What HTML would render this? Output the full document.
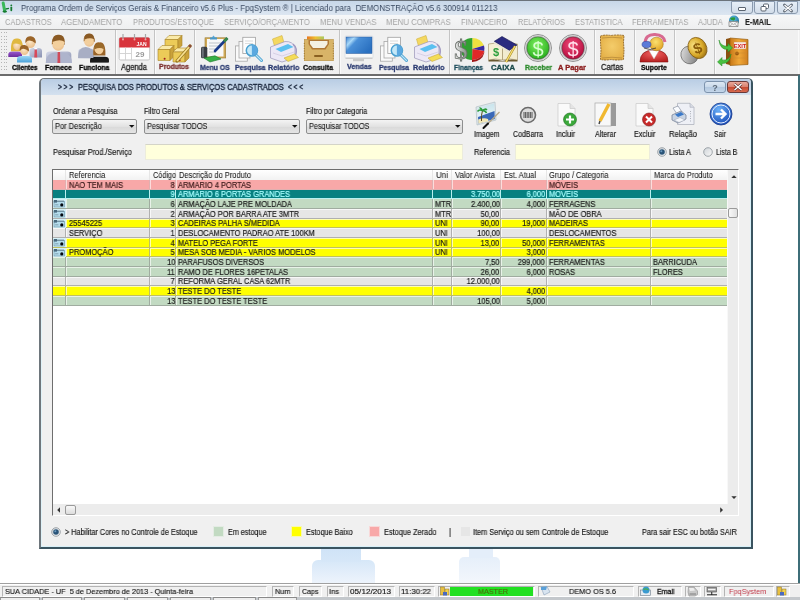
<!DOCTYPE html><html><head><meta charset="utf-8"><style>
html,body{margin:0;padding:0;width:800px;height:600px;overflow:hidden;background:#fff}
body{position:relative;font-family:'Liberation Sans',sans-serif}
.t{position:absolute;white-space:pre;line-height:1;will-change:transform;-webkit-text-stroke:0.15px currentColor}
svg{position:absolute;overflow:visible}
</style></head><body>
<div style="position:absolute;left:0px;top:0px;width:800px;height:15px;background:linear-gradient(#c6d6e8,#dce6f1);"></div>
<div style="position:absolute;left:0px;top:0px;width:800px;height:1px;background:#6b737b;"></div>
<div class="t" style="left:21.00px;top:4px;font-size:9.0px;color:#3a4a62;transform:scaleX(0.8823);transform-origin:0 0;-webkit-text-stroke:0px;">Programa Ordem de Serviços Gerais &amp; Financeiro v5.6 Plus - FpqSystem ® | Licenciado para  DEMONSTRAÇÃO v5.6 300914 011213</div>
<svg style="left:0px;top:0px" width="16" height="14" viewBox="0 0 16 14"><path d="M3.2 3 L4.6 10.8" stroke="#3ab85a" stroke-width="3" stroke-linecap="round"/><ellipse cx="4.8" cy="11.6" rx="2.3" ry="1.1" fill="#157a30"/><path d="M5.6 9 L9 8.4" stroke="#157a30" stroke-width="1.4"/><circle cx="11.3" cy="5.4" r="0.9" fill="#157a30"/><path d="M11.3 7.6 V10.3" stroke="#157a30" stroke-width="1.8" stroke-linecap="round"/></svg>
<div style="position:absolute;left:731px;top:1px;width:22px;height:13px;box-sizing:border-box;border:1px solid #8a9aae;border-radius:0 0 3px 3px;background:linear-gradient(#e6eef7,#d2dde9);"></div>
<div style="position:absolute;left:754px;top:1px;width:21px;height:13px;box-sizing:border-box;border:1px solid #8a9aae;border-radius:0 0 3px 3px;background:linear-gradient(#e6eef7,#d2dde9);"></div>
<div style="position:absolute;left:777px;top:1px;width:21px;height:13px;box-sizing:border-box;border:1px solid #8a9aae;border-radius:0 0 3px 3px;background:linear-gradient(#e6eef7,#d2dde9);"></div>
<div style="position:absolute;left:738px;top:7px;width:8px;height:3.5px;border:1px solid #5a6470;border-radius:1px;background:#fff;box-sizing:border-box"></div>
<svg style="left:760px;top:3px" width="10" height="9"><rect x="3.5" y="1" width="5" height="4.5" rx="1" fill="#fff" stroke="#5a6470"/><rect x="1" y="3.5" width="5" height="4.5" rx="1" fill="#fff" stroke="#5a6470"/></svg>
<svg style="left:783px;top:3.5px" width="10" height="8"><path d="M1.5 1 L8.5 7 M8.5 1 L1.5 7" stroke="#5a6470" stroke-width="2.8" stroke-linecap="round"/><path d="M1.5 1 L8.5 7 M8.5 1 L1.5 7" stroke="#fff" stroke-width="1.3"/></svg>
<div style="position:absolute;left:0px;top:15px;width:800px;height:14px;background:linear-gradient(#f6f7f8,#eeeff0);"></div>
<div style="position:absolute;left:0px;top:29px;width:800px;height:1px;background:#a8a8a8;"></div>
<div class="t" style="left:5.00px;top:18px;font-size:9.0px;color:#a4a4a4;transform:scaleX(0.8320);transform-origin:0 0;-webkit-text-stroke:0px;">CADASTROS</div>
<div class="t" style="left:61.00px;top:18px;font-size:9.0px;color:#a4a4a4;transform:scaleX(0.8728);transform-origin:0 0;-webkit-text-stroke:0px;">AGENDAMENTO</div>
<div class="t" style="left:133.00px;top:18px;font-size:9.0px;color:#a4a4a4;transform:scaleX(0.8314);transform-origin:0 0;-webkit-text-stroke:0px;">PRODUTOS/ESTOQUE</div>
<div class="t" style="left:224.30px;top:18px;font-size:9.0px;color:#a4a4a4;transform:scaleX(0.8469);transform-origin:0 0;-webkit-text-stroke:0px;">SERVIÇO/ORÇAMENTO</div>
<div class="t" style="left:320.20px;top:18px;font-size:9.0px;color:#a4a4a4;transform:scaleX(0.8559);transform-origin:0 0;-webkit-text-stroke:0px;">MENU VENDAS</div>
<div class="t" style="left:386.20px;top:18px;font-size:9.0px;color:#a4a4a4;transform:scaleX(0.8690);transform-origin:0 0;-webkit-text-stroke:0px;">MENU COMPRAS</div>
<div class="t" style="left:460.60px;top:18px;font-size:9.0px;color:#a4a4a4;transform:scaleX(0.8360);transform-origin:0 0;-webkit-text-stroke:0px;">FINANCEIRO</div>
<div class="t" style="left:517.80px;top:18px;font-size:9.0px;color:#a4a4a4;transform:scaleX(0.8179);transform-origin:0 0;-webkit-text-stroke:0px;">RELATÓRIOS</div>
<div class="t" style="left:574.60px;top:18px;font-size:9.0px;color:#a4a4a4;transform:scaleX(0.8346);transform-origin:0 0;-webkit-text-stroke:0px;">ESTATISTICA</div>
<div class="t" style="left:631.80px;top:18px;font-size:9.0px;color:#a4a4a4;transform:scaleX(0.8390);transform-origin:0 0;-webkit-text-stroke:0px;">FERRAMENTAS</div>
<div class="t" style="left:697.60px;top:18px;font-size:9.0px;color:#a4a4a4;transform:scaleX(0.8405);transform-origin:0 0;-webkit-text-stroke:0px;">AJUDA</div>
<div class="t" style="left:744.60px;top:18px;font-size:8.8px;color:#222;font-weight:bold;-webkit-text-stroke:0.3px currentColor;transform:scaleX(0.8513);transform-origin:0 0;-webkit-text-stroke:0.1px currentColor;">E-MAIL</div>
<svg style="left:727px;top:15px" width="14" height="14" viewBox="0 0 14 14"><defs><radialGradient id="gGl" cx="0.4" cy="0.35" r="0.7"><stop offset="0" stop-color="#6ac8f0"/><stop offset="1" stop-color="#1a6a98"/></radialGradient></defs><circle cx="7" cy="5.5" r="5" fill="url(#gGl)"/><path d="M3 3.5 Q5 1.5 8 2.5 Q9 4.5 7 5.5 Q4.5 6 3 3.5 Z M8.5 7 Q11 6 11.5 8 Q10 10 8.5 9.5 Z" fill="#2a9a3a"/><path d="M2 6.5 L11 6.5 L11 11.5 L2 11.5 Z" fill="#f4f4f4" stroke="#7a7a7a" stroke-width="0.7"/><path d="M2 6.5 L6.5 9.5 L11 6.5 M2 11.5 L5.5 9 M11 11.5 L7.5 9" stroke="#8a8a8a" stroke-width="0.6" fill="none"/></svg>
<div style="position:absolute;left:0px;top:30px;width:800px;height:44px;background:#f0f0f0;"></div>
<div style="position:absolute;left:0px;top:74px;width:800px;height:2px;background:#6c6c6c;"></div>
<div style="position:absolute;left:798px;top:30px;width:1px;height:44px;background:#fafafa;"></div>
<div style="position:absolute;left:1px;top:32px;width:1px;height:1px;background:#b4b4b4;"></div>
<div style="position:absolute;left:4px;top:32px;width:1px;height:1px;background:#b4b4b4;"></div>
<div style="position:absolute;left:6px;top:32px;width:1px;height:1px;background:#b4b4b4;"></div>
<div style="position:absolute;left:1px;top:36px;width:1px;height:1px;background:#b4b4b4;"></div>
<div style="position:absolute;left:4px;top:36px;width:1px;height:1px;background:#b4b4b4;"></div>
<div style="position:absolute;left:6px;top:36px;width:1px;height:1px;background:#b4b4b4;"></div>
<div style="position:absolute;left:1px;top:39px;width:1px;height:1px;background:#b4b4b4;"></div>
<div style="position:absolute;left:4px;top:39px;width:1px;height:1px;background:#b4b4b4;"></div>
<div style="position:absolute;left:6px;top:39px;width:1px;height:1px;background:#b4b4b4;"></div>
<div style="position:absolute;left:1px;top:42px;width:1px;height:1px;background:#b4b4b4;"></div>
<div style="position:absolute;left:4px;top:42px;width:1px;height:1px;background:#b4b4b4;"></div>
<div style="position:absolute;left:6px;top:42px;width:1px;height:1px;background:#b4b4b4;"></div>
<div style="position:absolute;left:1px;top:46px;width:1px;height:1px;background:#b4b4b4;"></div>
<div style="position:absolute;left:4px;top:46px;width:1px;height:1px;background:#b4b4b4;"></div>
<div style="position:absolute;left:6px;top:46px;width:1px;height:1px;background:#b4b4b4;"></div>
<div style="position:absolute;left:1px;top:49px;width:1px;height:1px;background:#b4b4b4;"></div>
<div style="position:absolute;left:4px;top:49px;width:1px;height:1px;background:#b4b4b4;"></div>
<div style="position:absolute;left:6px;top:49px;width:1px;height:1px;background:#b4b4b4;"></div>
<div style="position:absolute;left:1px;top:52px;width:1px;height:1px;background:#b4b4b4;"></div>
<div style="position:absolute;left:4px;top:52px;width:1px;height:1px;background:#b4b4b4;"></div>
<div style="position:absolute;left:6px;top:52px;width:1px;height:1px;background:#b4b4b4;"></div>
<div style="position:absolute;left:1px;top:56px;width:1px;height:1px;background:#b4b4b4;"></div>
<div style="position:absolute;left:4px;top:56px;width:1px;height:1px;background:#b4b4b4;"></div>
<div style="position:absolute;left:6px;top:56px;width:1px;height:1px;background:#b4b4b4;"></div>
<div style="position:absolute;left:1px;top:59px;width:1px;height:1px;background:#b4b4b4;"></div>
<div style="position:absolute;left:4px;top:59px;width:1px;height:1px;background:#b4b4b4;"></div>
<div style="position:absolute;left:6px;top:59px;width:1px;height:1px;background:#b4b4b4;"></div>
<div style="position:absolute;left:1px;top:62px;width:1px;height:1px;background:#b4b4b4;"></div>
<div style="position:absolute;left:4px;top:62px;width:1px;height:1px;background:#b4b4b4;"></div>
<div style="position:absolute;left:6px;top:62px;width:1px;height:1px;background:#b4b4b4;"></div>
<div style="position:absolute;left:1px;top:66px;width:1px;height:1px;background:#b4b4b4;"></div>
<div style="position:absolute;left:4px;top:66px;width:1px;height:1px;background:#b4b4b4;"></div>
<div style="position:absolute;left:6px;top:66px;width:1px;height:1px;background:#b4b4b4;"></div>
<div style="position:absolute;left:1px;top:69px;width:1px;height:1px;background:#b4b4b4;"></div>
<div style="position:absolute;left:4px;top:69px;width:1px;height:1px;background:#b4b4b4;"></div>
<div style="position:absolute;left:6px;top:69px;width:1px;height:1px;background:#b4b4b4;"></div>
<div style="position:absolute;left:115px;top:30px;width:1px;height:44px;background:#c4c4c4;"></div>
<div style="position:absolute;left:116px;top:30px;width:1px;height:44px;background:#fafafa;"></div>
<div style="position:absolute;left:154px;top:30px;width:1px;height:44px;background:#c4c4c4;"></div>
<div style="position:absolute;left:155px;top:30px;width:1px;height:44px;background:#fafafa;"></div>
<div style="position:absolute;left:194px;top:30px;width:1px;height:44px;background:#c4c4c4;"></div>
<div style="position:absolute;left:195px;top:30px;width:1px;height:44px;background:#fafafa;"></div>
<div style="position:absolute;left:339px;top:30px;width:1px;height:44px;background:#c4c4c4;"></div>
<div style="position:absolute;left:340px;top:30px;width:1px;height:44px;background:#fafafa;"></div>
<div style="position:absolute;left:449px;top:30px;width:1px;height:44px;background:#c4c4c4;"></div>
<div style="position:absolute;left:450px;top:30px;width:1px;height:44px;background:#fafafa;"></div>
<div style="position:absolute;left:594px;top:30px;width:1px;height:44px;background:#c4c4c4;"></div>
<div style="position:absolute;left:595px;top:30px;width:1px;height:44px;background:#fafafa;"></div>
<div style="position:absolute;left:634px;top:30px;width:1px;height:44px;background:#c4c4c4;"></div>
<div style="position:absolute;left:635px;top:30px;width:1px;height:44px;background:#fafafa;"></div>
<div style="position:absolute;left:674px;top:30px;width:1px;height:44px;background:#c4c4c4;"></div>
<div style="position:absolute;left:675px;top:30px;width:1px;height:44px;background:#fafafa;"></div>
<div style="position:absolute;left:714px;top:30px;width:1px;height:44px;background:#c4c4c4;"></div>
<div style="position:absolute;left:715px;top:30px;width:1px;height:44px;background:#fafafa;"></div>
<svg style="left:0px;top:0px" width="115" height="75" viewBox="0 0 115 75"><defs><linearGradient id="gBody" x1="0" y1="0" x2="1" y2="1"><stop offset="0" stop-color="#d4d8e8"/><stop offset="1" stop-color="#8890b0"/></linearGradient><linearGradient id="gPur" x1="0" y1="0" x2="0" y2="1"><stop offset="0" stop-color="#9a5ad0"/><stop offset="1" stop-color="#6a2a9a"/></linearGradient><linearGradient id="gBlu" x1="0" y1="0" x2="0" y2="1"><stop offset="0" stop-color="#9ad8f8"/><stop offset="1" stop-color="#4aa0d8"/></linearGradient><radialGradient id="gFace" cx="0.45" cy="0.4" r="0.7"><stop offset="0" stop-color="#fde8c8"/><stop offset="1" stop-color="#e8b880"/></radialGradient></defs><path d="M29.5 57.5 L29.5 51 Q29.5 48 33.5 48 L38 48 Q42 48 42 51 L42 57.5 Z" fill="url(#gBody)"/><path d="M33.75 48 L35.75 50 L37.75 48 Z" fill="#fff"/><path d="M34.65 49.5 L36.85 49.5 L37.25 57.5 L34.25 57.5 Z" fill="#d84a5a"/><ellipse cx="30.5" cy="42.5" rx="4.8" ry="5.5" fill="url(#gFace)"/><path d="M25.3 43.0 Q24.9 35.5 31.0 36.2 Q36.3 37.0 35.699999999999996 43.5 Q31.46 39.475 27.62 40.85 Q26.18 42.5 25.3 43.0 Z" fill="#9a6428"/><path d="M8.3 57 L8.3 54.5 Q8.3 51.5 12.3 51.5 L18 51.5 Q22 51.5 22 54.5 L22 57 Z" fill="url(#gPur)"/><path d="M11.0 51.2 Q10.5 37.8 17 38.599999999999994 Q23.5 37.8 23.0 51.2 Z" fill="#e0b840"/><ellipse cx="17" cy="45.5" rx="3.8249999999999997" ry="4.680000000000001" fill="url(#gFace)"/><path d="M12.5 44 Q12.5 38.8 17 39.3 Q21.5 38.8 21.5 45 Q17 42.4 12.5 44 Z" fill="#e0b840"/><path d="M17 62.5 L17 59 Q17 56 21 56 L28 56 Q32 56 32 59 L32 62.5 Z" fill="url(#gBlu)"/><ellipse cx="24.3" cy="50.5" rx="4.2" ry="4.6" fill="url(#gFace)"/><path d="M19.700000000000003 51.0 Q19.3 44.4 24.8 45.1 Q29.5 45.9 28.9 51.5 Q25.14 47.97 21.78 49.12 Q20.52 50.5 19.700000000000003 51.0 Z" fill="#9a6428"/><path d="M46 63 L46 54.5 Q46 51.5 50 51.5 L67.3 51.5 Q71.3 51.5 71.3 54.5 L71.3 63 Z" fill="url(#gBody)"/><path d="M56.65 51.5 L58.65 53.5 L60.65 51.5 Z" fill="#fff"/><path d="M57.55 53.0 L59.75 53.0 L60.15 63 L57.15 63 Z" fill="#d84a5a"/><ellipse cx="58.2" cy="44" rx="6" ry="6.8" fill="url(#gFace)"/><path d="M51.800000000000004 44.5 Q51.400000000000006 35.7 58.7 36.400000000000006 Q65.2 37.2 64.60000000000001 45 Q59.400000000000006 40.26 54.6 41.96 Q52.800000000000004 44 51.800000000000004 44.5 Z" fill="#9a6428"/><path d="M78.3 58.2 L78.3 51.5 Q78.3 48.5 82.3 48.5 L89.6 48.5 Q93.6 48.5 93.6 51.5 L93.6 58.2 Z" fill="url(#gBody)"/><ellipse cx="89.2" cy="41" rx="5.2" ry="5.8" fill="url(#gFace)"/><path d="M83.6 41.5 Q83.2 33.7 89.7 34.400000000000006 Q95.4 35.2 94.80000000000001 42 Q90.24000000000001 37.81 86.08 39.26 Q84.52 41 83.6 41.5 Z" fill="#9a6428"/><path d="M90.1 62.2 L90.1 59.8 Q90.1 56.8 94.1 56.8 L104.9 56.8 Q108.9 56.8 108.9 59.8 L108.9 62.2 Z" fill="#151515"/><path d="M93.2 55.4 Q92.7 41.6 99.3 42.4 Q105.89999999999999 41.6 105.39999999999999 55.4 Z" fill="#9a6428"/><ellipse cx="99.3" cy="49.5" rx="3.9099999999999997" ry="4.86" fill="url(#gFace)"/><path d="M94.7 48 Q94.7 42.6 99.3 43.1 Q103.89999999999999 42.6 103.89999999999999 49 Q99.3 46.3 94.7 48 Z" fill="#9a6428"/></svg>
<div class="t" style="left:12.00px;top:64px;font-size:7.2px;color:#000;font-weight:bold;-webkit-text-stroke:0.3px currentColor;transform:scaleX(0.9104);transform-origin:0 0;">Clientes</div>
<svg style="left:40px;top:30px" width="40" height="40" viewBox="0 0 40 40"><path d="M5.7 33 Q5.7 22 18.85 22 Q32 22 32 33 Z" fill="#aeb4cc"/><path d="M17.650000000000002 22 L20.05 22 L20.25 33 L17.450000000000003 33 Z" fill="#d04a5a"/><circle cx="18.5" cy="11.5" r="6" fill="#f3cf9c"/><path d="M12.2 12.0 Q12.5 4.3 18.5 4.7 Q24.5 4.3 24.8 12.0 Q20.3 8.5 12.2 12.0 Z" fill="#8a5a24"/></svg>
<div class="t" style="left:45.00px;top:64px;font-size:7.2px;color:#000;font-weight:bold;-webkit-text-stroke:0.3px currentColor;transform:scaleX(0.9532);transform-origin:0 0;">Fornece</div>
<svg style="left:75px;top:30px" width="40" height="40" viewBox="0 0 40 40"><path d="M3 28 Q3 17 10.75 17 Q18.5 17 18.5 28 Z" fill="#a8aec4"/><circle cx="14.2" cy="9.2" r="4.8" fill="#f3cf9c"/><path d="M9.099999999999998 9.7 Q9.399999999999999 3.1999999999999993 14.2 3.5999999999999996 Q19.0 3.1999999999999993 19.3 9.7 Q15.639999999999999 6.799999999999999 9.099999999999998 9.7 Z" fill="#8a5a24"/><path d="M15 32.5 Q15 27 24.35 27 Q33.7 27 33.7 32.5 Z" fill="#1a1a1a"/><circle cx="24" cy="19" r="4.6" fill="#f3cf9c"/><path d="M19.099999999999998 19.5 Q19.4 13.200000000000001 24 13.6 Q28.6 13.200000000000001 28.900000000000002 19.5 Q25.38 16.7 19.099999999999998 19.5 Z" fill="#9a6a2a"/></svg>
<div class="t" style="left:78.70px;top:64px;font-size:7.2px;color:#000;font-weight:bold;-webkit-text-stroke:0.3px currentColor;transform:scaleX(0.9469);transform-origin:0 0;">Funciona</div>
<svg style="left:118px;top:33px" width="33" height="28" viewBox="0 0 33 28"><rect x="1.2" y="4.5" width="30.5" height="22.5" rx="1.5" fill="#fff" stroke="#c4c4c4" stroke-width="1"/><path d="M1.2 6 Q1.2 4.5 2.7 4.5 L30.2 4.5 Q31.7 4.5 31.7 6 L31.7 14.5 L1.2 14.5 Z" fill="#d8343c"/><text x="23.5" y="13" font-size="5" font-weight="bold" fill="#fff" text-anchor="middle" font-family="Liberation Sans">JAN</text><text x="22" y="24" font-size="8" font-weight="bold" fill="#9a9a9a" text-anchor="middle" font-family="Liberation Sans">29</text><path d="M7.5 14.5 V27 M13.5 14.5 V27 M1.2 20.5 H13.5" stroke="#d0d0d0" stroke-width="0.9"/><path d="M5 1 V6.5 M16.5 1 V6.5 M27.5 1 V6.5" stroke="#a8a8a8" stroke-width="1.2"/><circle cx="5" cy="6.5" r="1" fill="#f0a0a0"/><circle cx="16.5" cy="6.5" r="1" fill="#f0a0a0"/><circle cx="27.5" cy="6.5" r="1" fill="#f0a0a0"/></svg>
<div class="t" style="left:121.00px;top:63px;font-size:8.6px;color:#222;transform:scaleX(0.8768);transform-origin:0 0;-webkit-text-stroke:0.3px currentColor;">Agenda</div>
<svg style="left:155px;top:33px" width="40" height="32" viewBox="0 0 40 32"><path d="M10 6.5 L14 2.5 L27 2.5 L23 6.5 Z" fill="#faeaa8" stroke="#a88428" stroke-width="0.6"/><path d="M10 6.5 L23 6.5 L23 16.5 L10 16.5 Z" fill="#eccb58" stroke="#a88428" stroke-width="0.6"/><path d="M23 6.5 L27 2.5 L27 12.5 L23 16.5 Z" fill="#caa23a" stroke="#a88428" stroke-width="0.6"/><circle cx="17.15" cy="14.7" r="1" fill="#a02020"/><path d="M3 16.5 L7 12.5 L19 12.5 L15 16.5 Z" fill="#faeaa8" stroke="#a88428" stroke-width="0.6"/><path d="M3 16.5 L15 16.5 L15 27.5 L3 27.5 Z" fill="#eccb58" stroke="#a88428" stroke-width="0.6"/><path d="M15 16.5 L19 12.5 L19 23.5 L15 27.5 Z" fill="#caa23a" stroke="#a88428" stroke-width="0.6"/><circle cx="9.600000000000001" cy="25.7" r="1" fill="#a02020"/><path d="M18 19 L22 15 L34 15 L30 19 Z" fill="#faeaa8" stroke="#a88428" stroke-width="0.6"/><path d="M18 19 L30 19 L30 29 L18 29 Z" fill="#eccb58" stroke="#a88428" stroke-width="0.6"/><path d="M30 19 L34 15 L34 25 L30 29 Z" fill="#caa23a" stroke="#a88428" stroke-width="0.6"/><circle cx="24.6" cy="27.2" r="1" fill="#a02020"/><path d="M22 28 L35 13" stroke="#9a7a20" stroke-width="3.2" stroke-linecap="round"/><path d="M22 28 L35 13" stroke="#f8e090" stroke-width="1.8"/><circle cx="35" cy="13" r="1.6" fill="#8a4a3a"/></svg>
<div class="t" style="left:158.75px;top:63px;font-size:7.0px;color:#7a2e2e;font-weight:bold;-webkit-text-stroke:0.3px currentColor;transform:scaleX(0.9765);transform-origin:0 0;">Produtos</div>
<svg style="left:198px;top:33px" width="34" height="32" viewBox="0 0 34 32"><rect x="7" y="4.8" width="20.7" height="20.2" fill="#d0aa58" stroke="#9a7a30" stroke-width="0.6"/><rect x="9" y="6" width="16.5" height="17.5" fill="#f8f8f8"/><path d="M11 10 H23 M11 13 H23 M11 16 H20 M11 19 H18" stroke="#a8b0b8" stroke-width="0.7"/><path d="M13 5.5 L15.5 2.5 L18 5.5 Z" fill="#5aa8d8"/><rect x="12" y="4.5" width="7" height="2" fill="#4a98c8"/><path d="M17 18 L28.5 6" stroke="#1a3a8a" stroke-width="2.6" stroke-linecap="round"/><path d="M26 8.5 L29.5 5" stroke="#3a8a4a" stroke-width="2.8"/><rect x="3" y="13.8" width="6.3" height="11.5" rx="1.5" fill="#3a3e44"/><rect x="3.8" y="14.5" width="2" height="10" fill="#6a7078"/><path d="M6 25 L17 22.8 L23 26 L12 29 Z" fill="#38b048" stroke="#1a7a2a" stroke-width="0.6"/></svg>
<div class="t" style="left:199.75px;top:64px;font-size:7.3px;color:#2a3a70;font-weight:bold;-webkit-text-stroke:0.3px currentColor;transform:scaleX(0.9404);transform-origin:0 0;">Menu OS</div>
<svg style="left:234px;top:33px" width="30" height="31" viewBox="0 0 30 31"><rect x="1.5" y="12.9" width="11.8" height="15.3" fill="#fafafa" stroke="#a8a8a8" stroke-width="0.8"/><rect x="5" y="8.4" width="11" height="16.6" fill="#fafafa" stroke="#a8a8a8" stroke-width="0.8"/><rect x="8.8" y="4.3" width="12.7" height="16.2" fill="#fdfdfd" stroke="#a0a0a0" stroke-width="0.8"/><path d="M11 8 H19 M11 10.5 H19" stroke="#c8c8c8" stroke-width="0.6"/><path d="M21.5 21.5 L27.5 27.5" stroke="#4aa0d0" stroke-width="3" stroke-linecap="round"/><path d="M21.5 21.5 L27.5 27.5" stroke="#b8e4f8" stroke-width="1.2" stroke-linecap="round"/><circle cx="17.9" cy="17.4" r="5.6" fill="#c4e8f8" stroke="#4aa0d0" stroke-width="1.5"/><path d="M17.9 11.8 A5.6 5.6 0 0 1 17.9 23 Z" fill="#5aa8e0"/></svg>
<div class="t" style="left:234.60px;top:64px;font-size:7.3px;color:#2a3a70;font-weight:bold;-webkit-text-stroke:0.3px currentColor;transform:scaleX(0.9483);transform-origin:0 0;">Pesquisa</div>
<svg style="left:269px;top:33px" width="32" height="31" viewBox="0 0 32 31"><path d="M3.5 6 L13 2.5 L15.5 11.5 L6 15 Z" fill="#f4d860" stroke="#c8a830" stroke-width="0.5"/><path d="M1.5 14 L16 8.5 Q24 8 26 15 L26 25 L13 29 L1.5 25 Z" fill="#ece8f6" stroke="#9a94b8" stroke-width="0.7"/><path d="M24 11 Q29 15 26.5 23" stroke="#a098c0" stroke-width="1.4" fill="none"/><path d="M6.5 16 L19 11 L24.5 14 L12 19 Z" fill="#5ac0f0"/><path d="M4 20 L13 23 L25 19" stroke="#c8c0d8" stroke-width="0.6" fill="none"/><path d="M15 25 L25.5 21 L29.5 24.5 L19 28.5 Z" fill="#f4dc58" stroke="#c0a030" stroke-width="0.5"/></svg>
<div class="t" style="left:268.40px;top:64px;font-size:7.3px;color:#2a3a70;font-weight:bold;-webkit-text-stroke:0.3px currentColor;transform:scaleX(0.9893);transform-origin:0 0;">Relatório</div>
<svg style="left:303px;top:33px" width="32" height="31" viewBox="0 0 32 31"><defs><linearGradient id="gTab" x1="0" y1="0" x2="1" y2="0"><stop offset="0" stop-color="#e87820"/><stop offset="0.5" stop-color="#f0c030"/><stop offset="1" stop-color="#a8c860"/></linearGradient></defs><path d="M4 3.4 L21 3.4 L21 7 L4 7 Z" fill="url(#gTab)"/><rect x="1.3" y="6.5" width="29" height="21.2" fill="#d8b468" stroke="#b89040" stroke-width="0.6"/><path d="M5.5 7 L26 7 L26 11 L22.5 16.5 L9 16.5 L5.5 11 Z" fill="#b07838"/><path d="M7 8 L24.5 8 L24.5 11 L21.5 15 L10 15 L7 11 Z" fill="#f4f0e4"/><rect x="11" y="22" width="9" height="2" rx="1" fill="#8a6020"/><path d="M1.3 10 V27 M30.3 10 V27" stroke="#a07830" stroke-width="1" stroke-dasharray="1 1.5"/></svg>
<div class="t" style="left:303.40px;top:64px;font-size:7.3px;color:#111;font-weight:bold;-webkit-text-stroke:0.3px currentColor;transform:scaleX(0.9606);transform-origin:0 0;">Consulta</div>
<svg style="left:344px;top:35px" width="30" height="28" viewBox="0 0 30 28"><defs><linearGradient id="gV" x1="0" y1="0" x2="1" y2="0.6"><stop offset="0" stop-color="#3a80d0"/><stop offset="0.25" stop-color="#a8d8f8"/><stop offset="0.4" stop-color="#4a90d8"/><stop offset="1" stop-color="#2a70c0"/></linearGradient></defs><rect x="1" y="1" width="28" height="22" rx="1" fill="#f8f8f8" stroke="#d0d8e0" stroke-width="0.6"/><rect x="2" y="2" width="26" height="16.5" fill="url(#gV)" stroke="#2a5a9a" stroke-width="0.5"/><path d="M1.5 23.2 H28.5" stroke="#b8b8b8" stroke-width="0.8"/><rect x="9" y="24" width="11" height="2.2" fill="#c8c8c8"/></svg>
<div class="t" style="left:346.90px;top:63px;font-size:7.3px;color:#2a3a70;font-weight:bold;-webkit-text-stroke:0.3px currentColor;transform:scaleX(0.9661);transform-origin:0 0;">Vendas</div>
<svg style="left:379px;top:33px" width="30" height="31" viewBox="0 0 30 31"><rect x="1.5" y="12.9" width="11.8" height="15.3" fill="#fafafa" stroke="#a8a8a8" stroke-width="0.8"/><rect x="5" y="8.4" width="11" height="16.6" fill="#fafafa" stroke="#a8a8a8" stroke-width="0.8"/><rect x="8.8" y="4.3" width="12.7" height="16.2" fill="#fdfdfd" stroke="#a0a0a0" stroke-width="0.8"/><path d="M11 8 H19 M11 10.5 H19" stroke="#c8c8c8" stroke-width="0.6"/><path d="M21.5 21.5 L27.5 27.5" stroke="#4aa0d0" stroke-width="3" stroke-linecap="round"/><path d="M21.5 21.5 L27.5 27.5" stroke="#b8e4f8" stroke-width="1.2" stroke-linecap="round"/><circle cx="17.9" cy="17.4" r="5.6" fill="#c4e8f8" stroke="#4aa0d0" stroke-width="1.5"/><path d="M17.9 11.8 A5.6 5.6 0 0 1 17.9 23 Z" fill="#5aa8e0"/></svg>
<div class="t" style="left:379.00px;top:64px;font-size:7.3px;color:#2a3a70;font-weight:bold;-webkit-text-stroke:0.3px currentColor;transform:scaleX(0.9359);transform-origin:0 0;">Pesquisa</div>
<svg style="left:413px;top:33px" width="32" height="31" viewBox="0 0 32 31"><path d="M3.5 6 L13 2.5 L15.5 11.5 L6 15 Z" fill="#f4d860" stroke="#c8a830" stroke-width="0.5"/><path d="M1.5 14 L16 8.5 Q24 8 26 15 L26 25 L13 29 L1.5 25 Z" fill="#ece8f6" stroke="#9a94b8" stroke-width="0.7"/><path d="M24 11 Q29 15 26.5 23" stroke="#a098c0" stroke-width="1.4" fill="none"/><path d="M6.5 16 L19 11 L24.5 14 L12 19 Z" fill="#5ac0f0"/><path d="M4 20 L13 23 L25 19" stroke="#c8c0d8" stroke-width="0.6" fill="none"/><path d="M15 25 L25.5 21 L29.5 24.5 L19 28.5 Z" fill="#f4dc58" stroke="#c0a030" stroke-width="0.5"/></svg>
<div class="t" style="left:413.00px;top:64px;font-size:7.3px;color:#2a3a70;font-weight:bold;-webkit-text-stroke:0.3px currentColor;transform:scaleX(0.9925);transform-origin:0 0;">Relatório</div>
<svg style="left:450px;top:33px" width="38" height="31" viewBox="0 0 38 31"><defs><linearGradient id="gSil" x1="0" y1="0" x2="1" y2="0"><stop offset="0" stop-color="#f0f0f0"/><stop offset="1" stop-color="#808880"/></linearGradient></defs><path d="M22.3 16 L22.3 5 A12 11 0 0 1 34 12.5 Z" fill="#f0e040"/><path d="M22.3 16 L34 12.5 A12 11 0 0 1 34.2 18 Z" fill="#3a2aa0"/><path d="M22.3 16 L34.2 18 A12 11 0 0 1 22 27 Z" fill="#e02828"/><path d="M22.3 16 L22 27 A12 11 0 0 1 22.3 5 Z" fill="#30a030"/><path d="M22 27 A12 11 0 0 0 34.2 18 L34.2 20 A12 11 0 0 1 22 29 Z" fill="#a01818"/><text x="11" y="26" font-size="27" font-weight="bold" fill="url(#gSil)" stroke="#6a706a" stroke-width="0.8" text-anchor="middle" font-family="Liberation Serif">$</text></svg>
<div class="t" style="left:454.00px;top:64px;font-size:7.3px;color:#1a4a5a;font-weight:bold;-webkit-text-stroke:0.3px currentColor;transform:scaleX(0.9164);transform-origin:0 0;">Finanças</div>
<svg style="left:487px;top:33px" width="33" height="31" viewBox="0 0 33 31"><path d="M1.5 11 Q8 9 15.5 11.5 L15.5 27 Q8 25 1.5 27 Z" fill="#f6f0d4" stroke="#9a8a60" stroke-width="0.6"/><path d="M15.5 11.5 Q23 9 30.5 11 L30.5 27 Q23 25 15.5 27 Z" fill="#f2ecd0" stroke="#9a8a60" stroke-width="0.6"/><path d="M1.5 27 Q8 25.5 15.5 28 Q23 25.5 30.5 27 L30.5 28.5 L1.5 28.5 Z" fill="#6a5a30"/><text x="9" y="22.5" font-size="11" font-weight="bold" fill="#30a040" text-anchor="middle" font-family="Liberation Sans">$</text><path d="M7 8.5 L15 3.5 L30 12 L22 17.5 Z" fill="#2a2a80" stroke="#10104a" stroke-width="0.6"/><path d="M7 8.5 L22 17.5 L22 19.5 L7 10.5 Z" fill="#e8e4d8"/><path d="M19 29 L28 13" stroke="#a08020" stroke-width="2.4"/><path d="M19 29 L28 13" stroke="#f8e070" stroke-width="1.4"/></svg>
<div class="t" style="left:491.00px;top:64px;font-size:7.3px;color:#1a4a4a;font-weight:bold;-webkit-text-stroke:0.3px currentColor;transform:scaleX(1.0567);transform-origin:0 0;">CAIXA</div>
<svg style="left:524px;top:34px" width="30" height="30" viewBox="0 0 30 30"><defs><radialGradient id="g524" cx="0.45" cy="0.35" r="0.7"><stop offset="0" stop-color="#80f060"/><stop offset="1" stop-color="#20a818"/></radialGradient></defs><circle cx="14" cy="14" r="13.5" fill="#e8e8e8" stroke="#888" stroke-width="0.9"/><circle cx="14" cy="14" r="12" fill="none" stroke="#b0b0b0" stroke-width="0.8"/><circle cx="14" cy="14" r="11.2" fill="url(#g524)" stroke="#404040" stroke-width="0.5"/><text x="14" y="21.5" font-size="20" fill="#d8ffd0" text-anchor="middle" font-family="Liberation Sans">$</text></svg>
<div class="t" style="left:525.00px;top:64px;font-size:7.3px;color:#2a8a2a;font-weight:bold;-webkit-text-stroke:0.3px currentColor;transform:scaleX(0.9371);transform-origin:0 0;">Receber</div>
<svg style="left:559px;top:34px" width="30" height="30" viewBox="0 0 30 30"><defs><radialGradient id="g559" cx="0.45" cy="0.35" r="0.7"><stop offset="0" stop-color="#f04a7a"/><stop offset="1" stop-color="#b00838"/></radialGradient></defs><circle cx="14" cy="14" r="13.5" fill="#e8e8e8" stroke="#888" stroke-width="0.9"/><circle cx="14" cy="14" r="12" fill="none" stroke="#b0b0b0" stroke-width="0.8"/><circle cx="14" cy="14" r="11.2" fill="url(#g559)" stroke="#404040" stroke-width="0.5"/><text x="14" y="21.5" font-size="20" fill="#ffe0ec" text-anchor="middle" font-family="Liberation Sans">$</text></svg>
<div class="t" style="left:558.00px;top:64px;font-size:7.3px;color:#8a1a1a;font-weight:bold;-webkit-text-stroke:0.3px currentColor;transform:scaleX(1.0249);transform-origin:0 0;">A Pagar</div>
<svg style="left:599px;top:34px" width="27" height="28" viewBox="0 0 27 28"><defs><radialGradient id="gC" cx="0.5" cy="0.45" r="0.6"><stop offset="0" stop-color="#f4cc6a"/><stop offset="1" stop-color="#e4b048"/></radialGradient></defs><path d="M1.5 2 Q6 0.5 12 1.5 Q19 0.5 25 1.5 L24.5 8 L25 16 L24.5 25.5 Q18 26.5 12 25.5 Q6 26.5 1.5 25.5 L2 16 L1.5 8 Z" fill="url(#gC)" stroke="#9a7030" stroke-width="1" stroke-dasharray="2 0.7"/><path d="M3 4 Q13 2.5 23 4" stroke="#b88a3a" stroke-width="0.8" fill="none"/><path d="M3 24 Q13 22.5 23 24" stroke="#b88a3a" stroke-width="0.8" fill="none"/></svg>
<div class="t" style="left:600.60px;top:63px;font-size:8.6px;color:#222;transform:scaleX(0.8843);transform-origin:0 0;-webkit-text-stroke:0.3px currentColor;">Cartas</div>
<svg style="left:638px;top:32px" width="32" height="32" viewBox="0 0 32 32"><defs><radialGradient id="gSu" cx="0.5" cy="0.3" r="0.8"><stop offset="0" stop-color="#f06060"/><stop offset="1" stop-color="#b01818"/></radialGradient><radialGradient id="gFa" cx="0.45" cy="0.35" r="0.7"><stop offset="0" stop-color="#fbe070"/><stop offset="1" stop-color="#e0a020"/></radialGradient></defs><path d="M2 30 Q2 18 16 18 Q30 18 30 30 Z" fill="url(#gSu)" stroke="#801010" stroke-width="0.6"/><path d="M11 18.5 L16 27 L21 18.5 Z" fill="#fff" stroke="#c0c0c0" stroke-width="0.4"/><circle cx="18.5" cy="12" r="6.8" fill="url(#gFa)" stroke="#a07010" stroke-width="0.5"/><path d="M7 12 Q7 2 17 2.5 Q26 3 27 10" stroke="#d86a90" stroke-width="3" fill="none"/><ellipse cx="8.5" cy="12.5" rx="4.5" ry="3.2" fill="#5a7ad8" stroke="#2a3a8a" stroke-width="0.5"/><path d="M6 16 Q12 19 18 16" stroke="#333" stroke-width="0.8" fill="none"/></svg>
<div class="t" style="left:640.60px;top:65px;font-size:6.6px;color:#111;font-weight:bold;-webkit-text-stroke:0.3px currentColor;transform:scaleX(1.0387);transform-origin:0 0;">Suporte</div>
<svg style="left:679px;top:36px" width="32" height="30" viewBox="0 0 32 30"><defs><linearGradient id="gSi" x1="0" y1="0" x2="1" y2="1"><stop offset="0" stop-color="#e8e8e8"/><stop offset="1" stop-color="#707070"/></linearGradient><radialGradient id="gGo" cx="0.4" cy="0.35" r="0.75"><stop offset="0" stop-color="#fbe58a"/><stop offset="0.6" stop-color="#d8a828"/><stop offset="1" stop-color="#8a6010"/></radialGradient></defs><ellipse cx="10.5" cy="19" rx="8.5" ry="9" transform="rotate(-30 10.5 19)" fill="url(#gSi)" stroke="#555" stroke-width="0.6"/><ellipse cx="18.5" cy="12" rx="9" ry="11" transform="rotate(-30 18.5 12)" fill="url(#gGo)" stroke="#7a5208" stroke-width="0.7"/><text x="18.5" y="17.5" font-size="15" font-weight="bold" fill="#8a5a08" text-anchor="middle" font-family="Liberation Sans" transform="rotate(-20 18.5 12)">$</text></svg>
<svg style="left:717px;top:36px" width="34" height="31" viewBox="0 0 34 31"><defs><linearGradient id="gDo" x1="0" y1="0" x2="1" y2="0"><stop offset="0" stop-color="#c87818"/><stop offset="0.5" stop-color="#f0a838"/><stop offset="1" stop-color="#d08020"/></linearGradient></defs><path d="M9 3 L13 2 L13 29 L9 28 Z" fill="#8a5010"/><path d="M13 2 L31 3.5 L31 28.5 L13 29.5 Z" fill="url(#gDo)" stroke="#9a6010" stroke-width="0.7"/><rect x="17" y="6" width="12" height="7" fill="#f8e8e0" stroke="#c09060" stroke-width="0.4"/><text x="23" y="11.6" font-size="5.6" font-weight="bold" fill="#d02020" text-anchor="middle" font-family="Liberation Sans">EXIT</text><circle cx="20" cy="17.5" r="1.6" fill="#a86010" stroke="#6a3a08" stroke-width="0.4"/><path d="M15 17 H29 M15 22 H29" stroke="#c88a30" stroke-width="0.5"/><path d="M2 4 Q4 11 11 10 L11 7.5 L15.5 12 L11 16 L11 13.5 Q3 14 2 4 Z" fill="#48c040" stroke="#208a20" stroke-width="0.5"/><path d="M14 18 Q12 25 5 24 L5 21.5 L0.5 26 L5 30 L5 27.5 Q13 28 14 18 Z" fill="#48c040" stroke="#208a20" stroke-width="0.5"/></svg>
<div style="position:absolute;left:798px;top:75px;width:2px;height:509px;background:#3e6e78;"></div>
<div style="position:absolute;left:312px;top:560px;width:63px;height:24px;background:linear-gradient(#d6e7f8,#eef4fc);border-radius:6px 6px 0 0;"></div>
<div style="position:absolute;left:321px;top:548px;width:40px;height:14px;background:linear-gradient(#cfe3f7,#d6e7f8);"></div>
<div style="position:absolute;left:459px;top:557px;width:41px;height:27px;background:linear-gradient(#e6effa,#f3f7fc);border-radius:5px 5px 0 0;"></div>
<div style="position:absolute;left:469px;top:548px;width:24px;height:10px;background:#e4eefa;"></div>
<div style="position:absolute;left:39px;top:78px;width:714px;height:471px;box-sizing:border-box;border:1px solid #6e767c;border-width:1px 2px 2px 2px;border-bottom-color:#3a5460;border-right-color:#3a5460;border-radius:5px 5px 0 0;background:#f0f0f0;"></div>
<div style="position:absolute;left:41px;top:79px;width:710px;height:16px;background:linear-gradient(#b9cde4,#d4e1ef);border-radius:4px 4px 0 0;"></div>
<div style="position:absolute;left:41px;top:95px;width:1px;height:452px;background:#dff2f8;"></div>
<div style="position:absolute;left:750px;top:95px;width:1px;height:452px;background:#d8f0f8;"></div>
<div style="position:absolute;left:41px;top:546px;width:710px;height:1px;background:#d8f0f8;"></div>
<div class="t" style="left:57.50px;top:83px;font-size:8.4px;color:#18243a;transform:scaleX(0.7738);transform-origin:0 0;-webkit-text-stroke:0.35px currentColor;">&gt; &gt; &gt;</div>
<div class="t" style="left:77.60px;top:83px;font-size:8.4px;color:#18243a;transform:scaleX(0.8873);transform-origin:0 0;-webkit-text-stroke:0.35px currentColor;">PESQUISA DOS PRODUTOS &amp; SERVIÇOS CADASTRADOS</div>
<div class="t" style="left:287.50px;top:83px;font-size:8.4px;color:#18243a;transform:scaleX(0.7738);transform-origin:0 0;-webkit-text-stroke:0.35px currentColor;">&lt; &lt; &lt;</div>
<div style="position:absolute;left:704px;top:81px;width:22px;height:12px;box-sizing:border-box;border:1px solid #7d93ad;border-radius:3px;background:linear-gradient(#dde8f4 0%,#c9d9ea 50%,#b3c8df 51%,#c4d6ea 100%);"></div>
<div style="position:absolute;left:727px;top:81px;width:22px;height:12px;box-sizing:border-box;border:1px solid #6a3a3a;border-radius:3px;background:linear-gradient(#eaa89a 0%,#d9806e 50%,#c64a32 51%,#d86a50 100%);"></div>
<div class="t" style="left:615.00px;width:200px;text-align:center;top:84px;font-size:9px;color:#5a6878;font-weight:bold;-webkit-text-stroke:0.3px currentColor;-webkit-text-stroke:0px;">?</div>
<svg style="left:733px;top:83px" width="10" height="8"><path d="M1.5 1 L8.5 7 M8.5 1 L1.5 7" stroke="#5a2a2a" stroke-width="2.8"/><path d="M1.5 1 L8.5 7 M8.5 1 L1.5 7" stroke="#fff" stroke-width="1.5"/></svg>
<div class="t" style="left:53.00px;top:108px;font-size:8.2px;color:#151515;transform:scaleX(0.8844);transform-origin:0 0;">Ordenar a Pesquisa</div>
<div class="t" style="left:143.75px;top:108px;font-size:8.2px;color:#151515;transform:scaleX(0.8754);transform-origin:0 0;">Filtro Geral</div>
<div class="t" style="left:306.25px;top:108px;font-size:8.2px;color:#151515;transform:scaleX(0.8734);transform-origin:0 0;">Filtro por Categoria</div>
<div style="position:absolute;left:52px;top:119px;width:85px;height:15px;box-sizing:border-box;border:1px solid #8e8f8f;border-radius:2px;background:linear-gradient(#f4f4f4,#e2e2e2 50%,#d9d9d9 51%,#e4e4e4);"></div>
<div class="t" style="left:55.00px;top:123px;font-size:8.2px;color:#111;transform:scaleX(0.9108);transform-origin:0 0;-webkit-text-stroke:0.05px currentColor;">Por Descrição</div>
<svg style="left:128.5px;top:125.3px" width="6" height="3"><path d="M0 0 H5.5 L2.75 2.8 Z" fill="#111"/></svg>
<div style="position:absolute;left:144px;top:119px;width:156px;height:15px;box-sizing:border-box;border:1px solid #8e8f8f;border-radius:2px;background:linear-gradient(#f4f4f4,#e2e2e2 50%,#d9d9d9 51%,#e4e4e4);"></div>
<div class="t" style="left:147.00px;top:123px;font-size:8.2px;color:#111;transform:scaleX(0.8949);transform-origin:0 0;-webkit-text-stroke:0.05px currentColor;">Pesquisar TODOS</div>
<svg style="left:291.5px;top:125.3px" width="6" height="3"><path d="M0 0 H5.5 L2.75 2.8 Z" fill="#111"/></svg>
<div style="position:absolute;left:306px;top:119px;width:157px;height:15px;box-sizing:border-box;border:1px solid #8e8f8f;border-radius:2px;background:linear-gradient(#f4f4f4,#e2e2e2 50%,#d9d9d9 51%,#e4e4e4);"></div>
<div class="t" style="left:309.00px;top:123px;font-size:8.2px;color:#111;transform:scaleX(0.8949);transform-origin:0 0;-webkit-text-stroke:0.05px currentColor;">Pesquisar TODOS</div>
<svg style="left:454.5px;top:125.3px" width="6" height="3"><path d="M0 0 H5.5 L2.75 2.8 Z" fill="#111"/></svg>
<div class="t" style="left:53.00px;top:149px;font-size:8.2px;color:#151515;transform:scaleX(0.8981);transform-origin:0 0;">Pesquisar Prod./Serviço</div>
<div style="position:absolute;left:145px;top:144px;width:318px;height:16px;box-sizing:border-box;border:1px solid #ececdc;border-top-color:#d4d4c8;background:#ffffdc;"></div>
<div class="t" style="left:474.30px;top:149px;font-size:8.2px;color:#151515;transform:scaleX(0.9078);transform-origin:0 0;">Referencia</div>
<div style="position:absolute;left:515px;top:144px;width:135px;height:16px;box-sizing:border-box;border:1px solid #ececdc;border-top-color:#d4d4c8;background:#ffffdc;"></div>
<svg style="left:657px;top:147px" width="10" height="10" viewBox="0 0 10 10"><defs><linearGradient id="gR" x1="0" y1="0" x2="1" y2="1"><stop offset="0" stop-color="#cfd4d8"/><stop offset="1" stop-color="#f8f8f8"/></linearGradient></defs><circle cx="5" cy="5" r="4.3" fill="url(#gR)" stroke="#8a9298" stroke-width="0.8"/><circle cx="5" cy="5" r="2.8" fill="#2a5478"/><circle cx="4.3" cy="4.2" r="1" fill="#6a9ac0"/></svg>
<div class="t" style="left:669.00px;top:149px;font-size:8.2px;color:#151515;transform:scaleX(0.8937);transform-origin:0 0;">Lista A</div>
<svg style="left:703px;top:147px" width="10" height="10" viewBox="0 0 10 10"><defs><linearGradient id="gR" x1="0" y1="0" x2="1" y2="1"><stop offset="0" stop-color="#cfd4d8"/><stop offset="1" stop-color="#f8f8f8"/></linearGradient></defs><circle cx="5" cy="5" r="4.3" fill="url(#gR)" stroke="#8a9298" stroke-width="0.8"/></svg>
<div class="t" style="left:715.60px;top:149px;font-size:8.2px;color:#151515;transform:scaleX(0.8536);transform-origin:0 0;">Lista B</div>
<div class="t" style="left:474.40px;top:131px;font-size:8.2px;color:#151515;transform:scaleX(0.8642);transform-origin:0 0;">Imagem</div>
<div class="t" style="left:513.00px;top:131px;font-size:8.2px;color:#151515;transform:scaleX(0.8548);transform-origin:0 0;">CodBarra</div>
<div class="t" style="left:556.40px;top:131px;font-size:8.2px;color:#151515;transform:scaleX(0.8777);transform-origin:0 0;">Incluir</div>
<div class="t" style="left:595.00px;top:131px;font-size:8.2px;color:#151515;transform:scaleX(0.8695);transform-origin:0 0;">Alterar</div>
<div class="t" style="left:634.00px;top:131px;font-size:8.2px;color:#151515;transform:scaleX(0.8779);transform-origin:0 0;">Excluir</div>
<div class="t" style="left:669.00px;top:131px;font-size:8.2px;color:#151515;transform:scaleX(0.9307);transform-origin:0 0;">Relação</div>
<div class="t" style="left:714.00px;top:131px;font-size:8.2px;color:#151515;transform:scaleX(0.8229);transform-origin:0 0;">Sair</div>
<svg style="left:474px;top:100px" width="28" height="30" viewBox="0 0 28 30"><defs><linearGradient id="gSky" x1="0" y1="0" x2="0" y2="1"><stop offset="0" stop-color="#c8e4ec"/><stop offset="1" stop-color="#f4fafc"/></linearGradient></defs><path d="M2 7 L21 2 L22 20 L3 25 Z" fill="#dfe6ea" stroke="#a8b8c0" stroke-width="0.6"/><path d="M3.5 8 L20 3.6 L20.8 19 L4.3 23.5 Z" fill="url(#gSky)"/><path d="M4 17 L20.5 11 L20.8 19 L4.3 23.5 Z" fill="#3a68b8"/><path d="M4.2 19.5 Q10 17.5 14 19 L14.5 21.3 L4.3 23.5 Z" fill="#f4e8b8"/><path d="M7.5 21 Q7 15 8.5 10.5" stroke="#5a4a20" stroke-width="1" fill="none"/><path d="M8.5 10.5 Q5 9 3.5 11.5 M8.5 10.5 Q11 8 13 10 M8.5 10.5 Q7 7.5 5.5 8 M8.5 10.5 Q12 11 12.5 13" stroke="#2a9a3a" stroke-width="1.5" fill="none"/><path d="M10 27.5 L25.5 12" stroke="#b8a888" stroke-width="1.2"/><path d="M9.5 28 L14 23.5" stroke="#111" stroke-width="2" stroke-linecap="round"/></svg>
<svg style="left:519px;top:106px" width="18" height="18" viewBox="0 0 18 18"><circle cx="9" cy="9" r="7.5" fill="#dcdcdc" stroke="#6a6a6a" stroke-width="1.6"/><path d="M5 6 V12 M6.6 6 V12 M8.2 6 V12 M9.8 6 V12 M11.4 6 V12 M13 6 V12" stroke="#333" stroke-width="0.8"/></svg>
<svg style="left:557px;top:103px" width="22" height="26" viewBox="0 0 22 26"><path d="M1 0.5 L13 0.5 L18 5.5 L18 23 L1 23 Z" fill="#fafafa" stroke="#c8c8c8" stroke-width="0.7"/><path d="M13 0.5 L13 5.5 L18 5.5" fill="#e4e4e4" stroke="#c8c8c8" stroke-width="0.7"/><circle cx="13" cy="16.5" r="6.5" fill="#3aa83a" stroke="#1a6a1a" stroke-width="0.6"/><path d="M13 12.5 V20.5 M9 16.5 H17" stroke="#fff" stroke-width="2.2"/></svg>
<svg style="left:594px;top:101px" width="24" height="27" viewBox="0 0 24 27"><rect x="1" y="2" width="16" height="23" fill="#f8f8f8" stroke="#a8a8a8" stroke-width="0.7"/><rect x="17" y="2" width="5" height="23" fill="#9a9a9a"/><path d="M6 20 L15 3" stroke="#f0b830" stroke-width="3.4"/><path d="M5 23 L6 20" stroke="#444" stroke-width="1.5"/></svg>
<svg style="left:635px;top:103px" width="22" height="26" viewBox="0 0 22 26"><path d="M1 0.5 L13 0.5 L18 5.5 L18 23 L1 23 Z" fill="#fafafa" stroke="#c8c8c8" stroke-width="0.7"/><path d="M13 0.5 L13 5.5 L18 5.5" fill="#e4e4e4" stroke="#c8c8c8" stroke-width="0.7"/><circle cx="14" cy="16.5" r="6.5" fill="#c82a2a" stroke="#801010" stroke-width="0.6"/><path d="M11 13.5 L17 19.5 M17 13.5 L11 19.5" stroke="#fff" stroke-width="2"/></svg>
<svg style="left:670px;top:102px" width="26" height="26" viewBox="0 0 26 26"><path d="M7.5 1.3 L20 1.3 L24 5.3 L24 22.5 L7.5 22.5 Z" fill="#eef0f6" stroke="#a8acb8" stroke-width="0.7"/><path d="M20 1.3 L20 5.3 L24 5.3" fill="#d8dce4" stroke="#a8acb8" stroke-width="0.6"/><path d="M20.5 9 V21" stroke="#8a8e98" stroke-width="0.8" stroke-dasharray="0.8 1.6"/><path d="M3 6 L8 4 L12 10 L7 12 Z" fill="#fafcff" stroke="#8890a0" stroke-width="0.7"/><path d="M2 13 L11 9 L16 13 L16 17 L8 21 L2 18 Z" fill="#c8d4e4" stroke="#7a8498" stroke-width="0.8"/><path d="M5 12.5 L11 10 L14 12.5 L8 15 Z" fill="#3a78c8"/><path d="M4 18 L10 15.5 L15 18 L9 20.5 Z" fill="#f4f6fa" stroke="#9aa2b0" stroke-width="0.5"/></svg>
<svg style="left:709px;top:102px" width="24" height="24" viewBox="0 0 24 24"><defs><radialGradient id="gS" cx="0.4" cy="0.3" r="0.8"><stop offset="0" stop-color="#6ab0f8"/><stop offset="1" stop-color="#1040b0"/></radialGradient></defs><circle cx="12" cy="12" r="11" fill="url(#gS)" stroke="#1a3a8a" stroke-width="0.8"/><circle cx="12" cy="12" r="9" fill="none" stroke="#e8f0ff" stroke-width="1"/><path d="M6.5 12 H16 M12 7.5 L16.5 12 L12 16.5" stroke="#fff" stroke-width="2.4" fill="none"/></svg>
<div style="position:absolute;left:52px;top:169px;width:687px;height:347px;box-sizing:border-box;border-top:1px solid #6e6e6e;border-left:1px solid #6e6e6e;border-right:1px solid #fff;border-bottom:1px solid #fff;background:#fff;"></div>
<div style="position:absolute;left:53px;top:170px;width:674px;height:10px;background:linear-gradient(#ffffff,#f2f2f2);"></div>
<div style="position:absolute;left:65px;top:170px;width:1px;height:10px;background:#e6e6e6;"></div>
<div style="position:absolute;left:149px;top:170px;width:1px;height:10px;background:#e6e6e6;"></div>
<div style="position:absolute;left:175px;top:170px;width:1px;height:10px;background:#e6e6e6;"></div>
<div style="position:absolute;left:432px;top:170px;width:1px;height:10px;background:#e6e6e6;"></div>
<div style="position:absolute;left:451px;top:170px;width:1px;height:10px;background:#e6e6e6;"></div>
<div style="position:absolute;left:500px;top:170px;width:1px;height:10px;background:#e6e6e6;"></div>
<div style="position:absolute;left:546px;top:170px;width:1px;height:10px;background:#e6e6e6;"></div>
<div style="position:absolute;left:650px;top:170px;width:1px;height:10px;background:#e6e6e6;"></div>
<div class="t" style="left:69.40px;top:171px;font-size:8.8px;color:#151515;transform:scaleX(0.8506);transform-origin:0 0;-webkit-text-stroke:0.05px currentColor;">Referencia</div>
<div class="t" style="left:152.60px;top:171px;font-size:8.8px;color:#151515;transform:scaleX(0.8247);transform-origin:0 0;-webkit-text-stroke:0.05px currentColor;">Código</div>
<div class="t" style="left:179.00px;top:171px;font-size:8.8px;color:#151515;transform:scaleX(0.8508);transform-origin:0 0;-webkit-text-stroke:0.05px currentColor;">Descrição do Produto</div>
<div class="t" style="left:436.00px;top:171px;font-size:8.8px;color:#151515;transform:scaleX(0.9088);transform-origin:0 0;-webkit-text-stroke:0.05px currentColor;">Uni</div>
<div class="t" style="left:455.00px;top:171px;font-size:8.8px;color:#151515;transform:scaleX(0.8761);transform-origin:0 0;-webkit-text-stroke:0.05px currentColor;">Valor Avista</div>
<div class="t" style="left:504.00px;top:171px;font-size:8.8px;color:#151515;transform:scaleX(0.8607);transform-origin:0 0;-webkit-text-stroke:0.05px currentColor;">Est. Atual</div>
<div class="t" style="left:549.00px;top:171px;font-size:8.8px;color:#151515;transform:scaleX(0.8506);transform-origin:0 0;-webkit-text-stroke:0.05px currentColor;">Grupo / Categoria</div>
<div class="t" style="left:653.60px;top:171px;font-size:8.8px;color:#151515;transform:scaleX(0.8406);transform-origin:0 0;-webkit-text-stroke:0.05px currentColor;">Marca do Produto</div>
<div style="position:absolute;left:53px;top:180px;width:674px;height:10px;background:#f8a8a8;"></div>
<div style="position:absolute;left:53px;top:189px;width:674px;height:1px;background:#e0b0b0;"></div>
<div style="position:absolute;left:65px;top:180px;width:1px;height:9px;background:#e0b0b0;"></div>
<div style="position:absolute;left:66px;top:180px;width:1px;height:9px;background:#fcdcdc;"></div>
<div style="position:absolute;left:149px;top:180px;width:1px;height:9px;background:#e0b0b0;"></div>
<div style="position:absolute;left:150px;top:180px;width:1px;height:9px;background:#fcdcdc;"></div>
<div style="position:absolute;left:175px;top:180px;width:1px;height:9px;background:#e0b0b0;"></div>
<div style="position:absolute;left:176px;top:180px;width:1px;height:9px;background:#fcdcdc;"></div>
<div style="position:absolute;left:432px;top:180px;width:1px;height:9px;background:#e0b0b0;"></div>
<div style="position:absolute;left:433px;top:180px;width:1px;height:9px;background:#fcdcdc;"></div>
<div style="position:absolute;left:451px;top:180px;width:1px;height:9px;background:#e0b0b0;"></div>
<div style="position:absolute;left:452px;top:180px;width:1px;height:9px;background:#fcdcdc;"></div>
<div style="position:absolute;left:500px;top:180px;width:1px;height:9px;background:#e0b0b0;"></div>
<div style="position:absolute;left:501px;top:180px;width:1px;height:9px;background:#fcdcdc;"></div>
<div style="position:absolute;left:546px;top:180px;width:1px;height:9px;background:#e0b0b0;"></div>
<div style="position:absolute;left:547px;top:180px;width:1px;height:9px;background:#fcdcdc;"></div>
<div style="position:absolute;left:650px;top:180px;width:1px;height:9px;background:#e0b0b0;"></div>
<div style="position:absolute;left:651px;top:180px;width:1px;height:9px;background:#fcdcdc;"></div>
<div class="t" style="left:68.50px;top:181px;font-size:8.5px;color:#3a1a1a;transform:scaleX(0.8770);transform-origin:0 0;-webkit-text-stroke:0.2px currentColor;">NAO TEM MAIS</div>
<div class="t" style="right:624.80px;top:181px;font-size:8.5px;color:#3a1a1a;transform:scaleX(0.8770);transform-origin:100% 0;-webkit-text-stroke:0.2px currentColor;">8</div>
<div class="t" style="left:178.00px;top:181px;font-size:8.5px;color:#3a1a1a;transform:scaleX(0.8770);transform-origin:0 0;-webkit-text-stroke:0.2px currentColor;">ARMARIO 4 PORTAS</div>
<div class="t" style="left:548.50px;top:181px;font-size:8.5px;color:#3a1a1a;transform:scaleX(0.8770);transform-origin:0 0;-webkit-text-stroke:0.2px currentColor;">MÓVEIS</div>
<div style="position:absolute;left:53px;top:190px;width:674px;height:9px;background:#068080;"></div>
<div style="position:absolute;left:53px;top:198px;width:674px;height:1px;background:#b8f0f0;"></div>
<div style="position:absolute;left:65px;top:190px;width:1px;height:9px;background:#b8f0f0;"></div>
<div style="position:absolute;left:149px;top:190px;width:1px;height:9px;background:#b8f0f0;"></div>
<div style="position:absolute;left:175px;top:190px;width:1px;height:9px;background:#b8f0f0;"></div>
<div style="position:absolute;left:432px;top:190px;width:1px;height:9px;background:#b8f0f0;"></div>
<div style="position:absolute;left:451px;top:190px;width:1px;height:9px;background:#b8f0f0;"></div>
<div style="position:absolute;left:500px;top:190px;width:1px;height:9px;background:#b8f0f0;"></div>
<div style="position:absolute;left:546px;top:190px;width:1px;height:9px;background:#b8f0f0;"></div>
<div style="position:absolute;left:650px;top:190px;width:1px;height:9px;background:#b8f0f0;"></div>
<div class="t" style="right:624.80px;top:190px;font-size:8.5px;color:#a8ffff;transform:scaleX(0.8770);transform-origin:100% 0;-webkit-text-stroke:0.2px currentColor;">9</div>
<div class="t" style="left:178.00px;top:190px;font-size:8.5px;color:#a8ffff;transform:scaleX(0.8770);transform-origin:0 0;-webkit-text-stroke:0.2px currentColor;">ARMARIO 6 PORTAS GRANDES</div>
<div class="t" style="right:300.40px;top:190px;font-size:8.5px;color:#a8ffff;transform:scaleX(0.8770);transform-origin:100% 0;-webkit-text-stroke:0.2px currentColor;">3.750,00</div>
<div class="t" style="right:254.80px;top:190px;font-size:8.5px;color:#a8ffff;transform:scaleX(0.8770);transform-origin:100% 0;-webkit-text-stroke:0.2px currentColor;">6,000</div>
<div class="t" style="left:548.50px;top:190px;font-size:8.5px;color:#a8ffff;transform:scaleX(0.8770);transform-origin:0 0;-webkit-text-stroke:0.2px currentColor;">MÓVEIS</div>
<div style="position:absolute;left:53px;top:199px;width:674px;height:10px;background:#c2dac2;"></div>
<div style="position:absolute;left:53px;top:208px;width:674px;height:1px;background:#a0aca0;"></div>
<div style="position:absolute;left:65px;top:199px;width:1px;height:9px;background:#a0aca0;"></div>
<div style="position:absolute;left:66px;top:199px;width:1px;height:9px;background:#e8f2e8;"></div>
<div style="position:absolute;left:149px;top:199px;width:1px;height:9px;background:#a0aca0;"></div>
<div style="position:absolute;left:150px;top:199px;width:1px;height:9px;background:#e8f2e8;"></div>
<div style="position:absolute;left:175px;top:199px;width:1px;height:9px;background:#a0aca0;"></div>
<div style="position:absolute;left:176px;top:199px;width:1px;height:9px;background:#e8f2e8;"></div>
<div style="position:absolute;left:432px;top:199px;width:1px;height:9px;background:#a0aca0;"></div>
<div style="position:absolute;left:433px;top:199px;width:1px;height:9px;background:#e8f2e8;"></div>
<div style="position:absolute;left:451px;top:199px;width:1px;height:9px;background:#a0aca0;"></div>
<div style="position:absolute;left:452px;top:199px;width:1px;height:9px;background:#e8f2e8;"></div>
<div style="position:absolute;left:500px;top:199px;width:1px;height:9px;background:#a0aca0;"></div>
<div style="position:absolute;left:501px;top:199px;width:1px;height:9px;background:#e8f2e8;"></div>
<div style="position:absolute;left:546px;top:199px;width:1px;height:9px;background:#a0aca0;"></div>
<div style="position:absolute;left:547px;top:199px;width:1px;height:9px;background:#e8f2e8;"></div>
<div style="position:absolute;left:650px;top:199px;width:1px;height:9px;background:#a0aca0;"></div>
<div style="position:absolute;left:651px;top:199px;width:1px;height:9px;background:#e8f2e8;"></div>
<div class="t" style="right:624.80px;top:200px;font-size:8.5px;color:#1a1a1a;transform:scaleX(0.8770);transform-origin:100% 0;-webkit-text-stroke:0.2px currentColor;">6</div>
<div class="t" style="left:178.00px;top:200px;font-size:8.5px;color:#1a1a1a;transform:scaleX(0.8770);transform-origin:0 0;-webkit-text-stroke:0.2px currentColor;">ARMAÇÃO LAJE PRE MOLDADA</div>
<div class="t" style="left:435.00px;top:200px;font-size:8.5px;color:#1a1a1a;transform:scaleX(0.8770);transform-origin:0 0;-webkit-text-stroke:0.2px currentColor;">MTR</div>
<div class="t" style="right:300.40px;top:200px;font-size:8.5px;color:#1a1a1a;transform:scaleX(0.8770);transform-origin:100% 0;-webkit-text-stroke:0.2px currentColor;">2.400,00</div>
<div class="t" style="right:254.80px;top:200px;font-size:8.5px;color:#1a1a1a;transform:scaleX(0.8770);transform-origin:100% 0;-webkit-text-stroke:0.2px currentColor;">4,000</div>
<div class="t" style="left:548.50px;top:200px;font-size:8.5px;color:#1a1a1a;transform:scaleX(0.8770);transform-origin:0 0;-webkit-text-stroke:0.2px currentColor;">FERRAGENS</div>
<svg style="left:53px;top:199px" width="13" height="9" viewBox="0 0 13 9"><rect x="0" y="0" width="13" height="9" fill="#d6f2f8"/><rect x="1" y="2.5" width="10.5" height="5.5" fill="#b4dcec" stroke="#6a8fa2" stroke-width="0.6"/><rect x="0.8" y="1" width="3.2" height="2.6" fill="#48687c"/><rect x="4" y="1.6" width="7" height="1.1" fill="#6a8898"/><rect x="2.2" y="5.2" width="3.2" height="1.2" fill="#88a8b8"/><circle cx="8.8" cy="5.9" r="1.6" fill="#050a10"/></svg>
<div style="position:absolute;left:53px;top:209px;width:674px;height:10px;background:#e6e6e6;"></div>
<div style="position:absolute;left:53px;top:218px;width:674px;height:1px;background:#b0b0b0;"></div>
<div style="position:absolute;left:53px;top:209px;width:674px;height:1px;background:#f8f8f8;"></div>
<div style="position:absolute;left:65px;top:209px;width:1px;height:9px;background:#b0b0b0;"></div>
<div style="position:absolute;left:66px;top:209px;width:1px;height:9px;background:#f8f8f8;"></div>
<div style="position:absolute;left:149px;top:209px;width:1px;height:9px;background:#b0b0b0;"></div>
<div style="position:absolute;left:150px;top:209px;width:1px;height:9px;background:#f8f8f8;"></div>
<div style="position:absolute;left:175px;top:209px;width:1px;height:9px;background:#b0b0b0;"></div>
<div style="position:absolute;left:176px;top:209px;width:1px;height:9px;background:#f8f8f8;"></div>
<div style="position:absolute;left:432px;top:209px;width:1px;height:9px;background:#b0b0b0;"></div>
<div style="position:absolute;left:433px;top:209px;width:1px;height:9px;background:#f8f8f8;"></div>
<div style="position:absolute;left:451px;top:209px;width:1px;height:9px;background:#b0b0b0;"></div>
<div style="position:absolute;left:452px;top:209px;width:1px;height:9px;background:#f8f8f8;"></div>
<div style="position:absolute;left:500px;top:209px;width:1px;height:9px;background:#b0b0b0;"></div>
<div style="position:absolute;left:501px;top:209px;width:1px;height:9px;background:#f8f8f8;"></div>
<div style="position:absolute;left:546px;top:209px;width:1px;height:9px;background:#b0b0b0;"></div>
<div style="position:absolute;left:547px;top:209px;width:1px;height:9px;background:#f8f8f8;"></div>
<div style="position:absolute;left:650px;top:209px;width:1px;height:9px;background:#b0b0b0;"></div>
<div style="position:absolute;left:651px;top:209px;width:1px;height:9px;background:#f8f8f8;"></div>
<div class="t" style="right:624.80px;top:210px;font-size:8.5px;color:#1a1a1a;transform:scaleX(0.8770);transform-origin:100% 0;-webkit-text-stroke:0.2px currentColor;">2</div>
<div class="t" style="left:178.00px;top:210px;font-size:8.5px;color:#1a1a1a;transform:scaleX(0.8770);transform-origin:0 0;-webkit-text-stroke:0.2px currentColor;">ARMAÇÃO POR BARRA ATE 3MTR</div>
<div class="t" style="left:435.00px;top:210px;font-size:8.5px;color:#1a1a1a;transform:scaleX(0.8770);transform-origin:0 0;-webkit-text-stroke:0.2px currentColor;">MTR</div>
<div class="t" style="right:300.40px;top:210px;font-size:8.5px;color:#1a1a1a;transform:scaleX(0.8770);transform-origin:100% 0;-webkit-text-stroke:0.2px currentColor;">50,00</div>
<div class="t" style="left:548.50px;top:210px;font-size:8.5px;color:#1a1a1a;transform:scaleX(0.8770);transform-origin:0 0;-webkit-text-stroke:0.2px currentColor;">MÃO DE OBRA</div>
<svg style="left:53px;top:209px" width="13" height="9" viewBox="0 0 13 9"><rect x="0" y="0" width="13" height="9" fill="#d6f2f8"/><rect x="1" y="2.5" width="10.5" height="5.5" fill="#b4dcec" stroke="#6a8fa2" stroke-width="0.6"/><rect x="0.8" y="1" width="3.2" height="2.6" fill="#48687c"/><rect x="4" y="1.6" width="7" height="1.1" fill="#6a8898"/><rect x="2.2" y="5.2" width="3.2" height="1.2" fill="#88a8b8"/><circle cx="8.8" cy="5.9" r="1.6" fill="#050a10"/></svg>
<div style="position:absolute;left:53px;top:219px;width:674px;height:9px;background:#ffff00;"></div>
<div style="position:absolute;left:53px;top:227px;width:674px;height:1px;background:#c0c060;"></div>
<div style="position:absolute;left:53px;top:219px;width:674px;height:1px;background:#ffffb0;"></div>
<div style="position:absolute;left:65px;top:219px;width:1px;height:8px;background:#c0c060;"></div>
<div style="position:absolute;left:66px;top:219px;width:1px;height:8px;background:#ffffb0;"></div>
<div style="position:absolute;left:149px;top:219px;width:1px;height:8px;background:#c0c060;"></div>
<div style="position:absolute;left:150px;top:219px;width:1px;height:8px;background:#ffffb0;"></div>
<div style="position:absolute;left:175px;top:219px;width:1px;height:8px;background:#c0c060;"></div>
<div style="position:absolute;left:176px;top:219px;width:1px;height:8px;background:#ffffb0;"></div>
<div style="position:absolute;left:432px;top:219px;width:1px;height:8px;background:#c0c060;"></div>
<div style="position:absolute;left:433px;top:219px;width:1px;height:8px;background:#ffffb0;"></div>
<div style="position:absolute;left:451px;top:219px;width:1px;height:8px;background:#c0c060;"></div>
<div style="position:absolute;left:452px;top:219px;width:1px;height:8px;background:#ffffb0;"></div>
<div style="position:absolute;left:500px;top:219px;width:1px;height:8px;background:#c0c060;"></div>
<div style="position:absolute;left:501px;top:219px;width:1px;height:8px;background:#ffffb0;"></div>
<div style="position:absolute;left:546px;top:219px;width:1px;height:8px;background:#c0c060;"></div>
<div style="position:absolute;left:547px;top:219px;width:1px;height:8px;background:#ffffb0;"></div>
<div style="position:absolute;left:650px;top:219px;width:1px;height:8px;background:#c0c060;"></div>
<div style="position:absolute;left:651px;top:219px;width:1px;height:8px;background:#ffffb0;"></div>
<div class="t" style="left:68.50px;top:219px;font-size:8.5px;color:#1a1a1a;transform:scaleX(0.8770);transform-origin:0 0;-webkit-text-stroke:0.2px currentColor;">25545225</div>
<div class="t" style="right:624.80px;top:219px;font-size:8.5px;color:#1a1a1a;transform:scaleX(0.8770);transform-origin:100% 0;-webkit-text-stroke:0.2px currentColor;">3</div>
<div class="t" style="left:178.00px;top:219px;font-size:8.5px;color:#1a1a1a;transform:scaleX(0.8770);transform-origin:0 0;-webkit-text-stroke:0.2px currentColor;">CADEIRAS PALHA S/MEDIDA</div>
<div class="t" style="left:435.00px;top:219px;font-size:8.5px;color:#1a1a1a;transform:scaleX(0.8770);transform-origin:0 0;-webkit-text-stroke:0.2px currentColor;">UNI</div>
<div class="t" style="right:300.40px;top:219px;font-size:8.5px;color:#1a1a1a;transform:scaleX(0.8770);transform-origin:100% 0;-webkit-text-stroke:0.2px currentColor;">90,00</div>
<div class="t" style="right:254.80px;top:219px;font-size:8.5px;color:#1a1a1a;transform:scaleX(0.8770);transform-origin:100% 0;-webkit-text-stroke:0.2px currentColor;">19,000</div>
<div class="t" style="left:548.50px;top:219px;font-size:8.5px;color:#1a1a1a;transform:scaleX(0.8770);transform-origin:0 0;-webkit-text-stroke:0.2px currentColor;">MADEIRAS</div>
<svg style="left:53px;top:219px" width="13" height="8" viewBox="0 0 13 8"><rect x="0" y="0" width="13" height="9" fill="#d6f2f8"/><rect x="1" y="2.5" width="10.5" height="5.5" fill="#b4dcec" stroke="#6a8fa2" stroke-width="0.6"/><rect x="0.8" y="1" width="3.2" height="2.6" fill="#48687c"/><rect x="4" y="1.6" width="7" height="1.1" fill="#6a8898"/><rect x="2.2" y="5.2" width="3.2" height="1.2" fill="#88a8b8"/><circle cx="8.8" cy="5.9" r="1.6" fill="#050a10"/></svg>
<div style="position:absolute;left:53px;top:228px;width:674px;height:10px;background:#e6e6e6;"></div>
<div style="position:absolute;left:53px;top:237px;width:674px;height:1px;background:#b0b0b0;"></div>
<div style="position:absolute;left:53px;top:228px;width:674px;height:1px;background:#f8f8f8;"></div>
<div style="position:absolute;left:65px;top:228px;width:1px;height:9px;background:#b0b0b0;"></div>
<div style="position:absolute;left:66px;top:228px;width:1px;height:9px;background:#f8f8f8;"></div>
<div style="position:absolute;left:149px;top:228px;width:1px;height:9px;background:#b0b0b0;"></div>
<div style="position:absolute;left:150px;top:228px;width:1px;height:9px;background:#f8f8f8;"></div>
<div style="position:absolute;left:175px;top:228px;width:1px;height:9px;background:#b0b0b0;"></div>
<div style="position:absolute;left:176px;top:228px;width:1px;height:9px;background:#f8f8f8;"></div>
<div style="position:absolute;left:432px;top:228px;width:1px;height:9px;background:#b0b0b0;"></div>
<div style="position:absolute;left:433px;top:228px;width:1px;height:9px;background:#f8f8f8;"></div>
<div style="position:absolute;left:451px;top:228px;width:1px;height:9px;background:#b0b0b0;"></div>
<div style="position:absolute;left:452px;top:228px;width:1px;height:9px;background:#f8f8f8;"></div>
<div style="position:absolute;left:500px;top:228px;width:1px;height:9px;background:#b0b0b0;"></div>
<div style="position:absolute;left:501px;top:228px;width:1px;height:9px;background:#f8f8f8;"></div>
<div style="position:absolute;left:546px;top:228px;width:1px;height:9px;background:#b0b0b0;"></div>
<div style="position:absolute;left:547px;top:228px;width:1px;height:9px;background:#f8f8f8;"></div>
<div style="position:absolute;left:650px;top:228px;width:1px;height:9px;background:#b0b0b0;"></div>
<div style="position:absolute;left:651px;top:228px;width:1px;height:9px;background:#f8f8f8;"></div>
<div class="t" style="left:68.50px;top:229px;font-size:8.5px;color:#1a1a1a;transform:scaleX(0.8770);transform-origin:0 0;-webkit-text-stroke:0.2px currentColor;">SERVIÇO</div>
<div class="t" style="right:624.80px;top:229px;font-size:8.5px;color:#1a1a1a;transform:scaleX(0.8770);transform-origin:100% 0;-webkit-text-stroke:0.2px currentColor;">1</div>
<div class="t" style="left:178.00px;top:229px;font-size:8.5px;color:#1a1a1a;transform:scaleX(0.8770);transform-origin:0 0;-webkit-text-stroke:0.2px currentColor;">DESLOCAMENTO PADRAO ATE 100KM</div>
<div class="t" style="left:435.00px;top:229px;font-size:8.5px;color:#1a1a1a;transform:scaleX(0.8770);transform-origin:0 0;-webkit-text-stroke:0.2px currentColor;">UNI</div>
<div class="t" style="right:300.40px;top:229px;font-size:8.5px;color:#1a1a1a;transform:scaleX(0.8770);transform-origin:100% 0;-webkit-text-stroke:0.2px currentColor;">100,00</div>
<div class="t" style="left:548.50px;top:229px;font-size:8.5px;color:#1a1a1a;transform:scaleX(0.8770);transform-origin:0 0;-webkit-text-stroke:0.2px currentColor;">DESLOCAMENTOS</div>
<div style="position:absolute;left:53px;top:238px;width:674px;height:10px;background:#ffff00;"></div>
<div style="position:absolute;left:53px;top:247px;width:674px;height:1px;background:#c0c060;"></div>
<div style="position:absolute;left:53px;top:238px;width:674px;height:1px;background:#ffffb0;"></div>
<div style="position:absolute;left:65px;top:238px;width:1px;height:9px;background:#c0c060;"></div>
<div style="position:absolute;left:66px;top:238px;width:1px;height:9px;background:#ffffb0;"></div>
<div style="position:absolute;left:149px;top:238px;width:1px;height:9px;background:#c0c060;"></div>
<div style="position:absolute;left:150px;top:238px;width:1px;height:9px;background:#ffffb0;"></div>
<div style="position:absolute;left:175px;top:238px;width:1px;height:9px;background:#c0c060;"></div>
<div style="position:absolute;left:176px;top:238px;width:1px;height:9px;background:#ffffb0;"></div>
<div style="position:absolute;left:432px;top:238px;width:1px;height:9px;background:#c0c060;"></div>
<div style="position:absolute;left:433px;top:238px;width:1px;height:9px;background:#ffffb0;"></div>
<div style="position:absolute;left:451px;top:238px;width:1px;height:9px;background:#c0c060;"></div>
<div style="position:absolute;left:452px;top:238px;width:1px;height:9px;background:#ffffb0;"></div>
<div style="position:absolute;left:500px;top:238px;width:1px;height:9px;background:#c0c060;"></div>
<div style="position:absolute;left:501px;top:238px;width:1px;height:9px;background:#ffffb0;"></div>
<div style="position:absolute;left:546px;top:238px;width:1px;height:9px;background:#c0c060;"></div>
<div style="position:absolute;left:547px;top:238px;width:1px;height:9px;background:#ffffb0;"></div>
<div style="position:absolute;left:650px;top:238px;width:1px;height:9px;background:#c0c060;"></div>
<div style="position:absolute;left:651px;top:238px;width:1px;height:9px;background:#ffffb0;"></div>
<div class="t" style="right:624.80px;top:239px;font-size:8.5px;color:#1a1a1a;transform:scaleX(0.8770);transform-origin:100% 0;-webkit-text-stroke:0.2px currentColor;">4</div>
<div class="t" style="left:178.00px;top:239px;font-size:8.5px;color:#1a1a1a;transform:scaleX(0.8770);transform-origin:0 0;-webkit-text-stroke:0.2px currentColor;">MATELO PEGA FORTE</div>
<div class="t" style="left:435.00px;top:239px;font-size:8.5px;color:#1a1a1a;transform:scaleX(0.8770);transform-origin:0 0;-webkit-text-stroke:0.2px currentColor;">UNI</div>
<div class="t" style="right:300.40px;top:239px;font-size:8.5px;color:#1a1a1a;transform:scaleX(0.8770);transform-origin:100% 0;-webkit-text-stroke:0.2px currentColor;">13,00</div>
<div class="t" style="right:254.80px;top:239px;font-size:8.5px;color:#1a1a1a;transform:scaleX(0.8770);transform-origin:100% 0;-webkit-text-stroke:0.2px currentColor;">50,000</div>
<div class="t" style="left:548.50px;top:239px;font-size:8.5px;color:#1a1a1a;transform:scaleX(0.8770);transform-origin:0 0;-webkit-text-stroke:0.2px currentColor;">FERRAMENTAS</div>
<svg style="left:53px;top:238px" width="13" height="9" viewBox="0 0 13 9"><rect x="0" y="0" width="13" height="9" fill="#d6f2f8"/><rect x="1" y="2.5" width="10.5" height="5.5" fill="#b4dcec" stroke="#6a8fa2" stroke-width="0.6"/><rect x="0.8" y="1" width="3.2" height="2.6" fill="#48687c"/><rect x="4" y="1.6" width="7" height="1.1" fill="#6a8898"/><rect x="2.2" y="5.2" width="3.2" height="1.2" fill="#88a8b8"/><circle cx="8.8" cy="5.9" r="1.6" fill="#050a10"/></svg>
<div style="position:absolute;left:53px;top:248px;width:674px;height:9px;background:#ffff00;"></div>
<div style="position:absolute;left:53px;top:256px;width:674px;height:1px;background:#c0c060;"></div>
<div style="position:absolute;left:53px;top:248px;width:674px;height:1px;background:#ffffb0;"></div>
<div style="position:absolute;left:65px;top:248px;width:1px;height:8px;background:#c0c060;"></div>
<div style="position:absolute;left:66px;top:248px;width:1px;height:8px;background:#ffffb0;"></div>
<div style="position:absolute;left:149px;top:248px;width:1px;height:8px;background:#c0c060;"></div>
<div style="position:absolute;left:150px;top:248px;width:1px;height:8px;background:#ffffb0;"></div>
<div style="position:absolute;left:175px;top:248px;width:1px;height:8px;background:#c0c060;"></div>
<div style="position:absolute;left:176px;top:248px;width:1px;height:8px;background:#ffffb0;"></div>
<div style="position:absolute;left:432px;top:248px;width:1px;height:8px;background:#c0c060;"></div>
<div style="position:absolute;left:433px;top:248px;width:1px;height:8px;background:#ffffb0;"></div>
<div style="position:absolute;left:451px;top:248px;width:1px;height:8px;background:#c0c060;"></div>
<div style="position:absolute;left:452px;top:248px;width:1px;height:8px;background:#ffffb0;"></div>
<div style="position:absolute;left:500px;top:248px;width:1px;height:8px;background:#c0c060;"></div>
<div style="position:absolute;left:501px;top:248px;width:1px;height:8px;background:#ffffb0;"></div>
<div style="position:absolute;left:546px;top:248px;width:1px;height:8px;background:#c0c060;"></div>
<div style="position:absolute;left:547px;top:248px;width:1px;height:8px;background:#ffffb0;"></div>
<div style="position:absolute;left:650px;top:248px;width:1px;height:8px;background:#c0c060;"></div>
<div style="position:absolute;left:651px;top:248px;width:1px;height:8px;background:#ffffb0;"></div>
<div class="t" style="left:68.50px;top:248px;font-size:8.5px;color:#1a1a1a;transform:scaleX(0.8770);transform-origin:0 0;-webkit-text-stroke:0.2px currentColor;">PROMOÇÃO</div>
<div class="t" style="right:624.80px;top:248px;font-size:8.5px;color:#1a1a1a;transform:scaleX(0.8770);transform-origin:100% 0;-webkit-text-stroke:0.2px currentColor;">5</div>
<div class="t" style="left:178.00px;top:248px;font-size:8.5px;color:#1a1a1a;transform:scaleX(0.8770);transform-origin:0 0;-webkit-text-stroke:0.2px currentColor;">MESA SOB MEDIA - VARIOS MODELOS</div>
<div class="t" style="left:435.00px;top:248px;font-size:8.5px;color:#1a1a1a;transform:scaleX(0.8770);transform-origin:0 0;-webkit-text-stroke:0.2px currentColor;">UNI</div>
<div class="t" style="right:254.80px;top:248px;font-size:8.5px;color:#1a1a1a;transform:scaleX(0.8770);transform-origin:100% 0;-webkit-text-stroke:0.2px currentColor;">3,000</div>
<svg style="left:53px;top:248px" width="13" height="8" viewBox="0 0 13 8"><rect x="0" y="0" width="13" height="9" fill="#d6f2f8"/><rect x="1" y="2.5" width="10.5" height="5.5" fill="#b4dcec" stroke="#6a8fa2" stroke-width="0.6"/><rect x="0.8" y="1" width="3.2" height="2.6" fill="#48687c"/><rect x="4" y="1.6" width="7" height="1.1" fill="#6a8898"/><rect x="2.2" y="5.2" width="3.2" height="1.2" fill="#88a8b8"/><circle cx="8.8" cy="5.9" r="1.6" fill="#050a10"/></svg>
<div style="position:absolute;left:53px;top:257px;width:674px;height:10px;background:#c2dac2;"></div>
<div style="position:absolute;left:53px;top:266px;width:674px;height:1px;background:#a0aca0;"></div>
<div style="position:absolute;left:53px;top:257px;width:674px;height:1px;background:#e8f2e8;"></div>
<div style="position:absolute;left:65px;top:257px;width:1px;height:9px;background:#a0aca0;"></div>
<div style="position:absolute;left:66px;top:257px;width:1px;height:9px;background:#e8f2e8;"></div>
<div style="position:absolute;left:149px;top:257px;width:1px;height:9px;background:#a0aca0;"></div>
<div style="position:absolute;left:150px;top:257px;width:1px;height:9px;background:#e8f2e8;"></div>
<div style="position:absolute;left:175px;top:257px;width:1px;height:9px;background:#a0aca0;"></div>
<div style="position:absolute;left:176px;top:257px;width:1px;height:9px;background:#e8f2e8;"></div>
<div style="position:absolute;left:432px;top:257px;width:1px;height:9px;background:#a0aca0;"></div>
<div style="position:absolute;left:433px;top:257px;width:1px;height:9px;background:#e8f2e8;"></div>
<div style="position:absolute;left:451px;top:257px;width:1px;height:9px;background:#a0aca0;"></div>
<div style="position:absolute;left:452px;top:257px;width:1px;height:9px;background:#e8f2e8;"></div>
<div style="position:absolute;left:500px;top:257px;width:1px;height:9px;background:#a0aca0;"></div>
<div style="position:absolute;left:501px;top:257px;width:1px;height:9px;background:#e8f2e8;"></div>
<div style="position:absolute;left:546px;top:257px;width:1px;height:9px;background:#a0aca0;"></div>
<div style="position:absolute;left:547px;top:257px;width:1px;height:9px;background:#e8f2e8;"></div>
<div style="position:absolute;left:650px;top:257px;width:1px;height:9px;background:#a0aca0;"></div>
<div style="position:absolute;left:651px;top:257px;width:1px;height:9px;background:#e8f2e8;"></div>
<div class="t" style="right:624.80px;top:258px;font-size:8.5px;color:#1a1a1a;transform:scaleX(0.8770);transform-origin:100% 0;-webkit-text-stroke:0.2px currentColor;">10</div>
<div class="t" style="left:178.00px;top:258px;font-size:8.5px;color:#1a1a1a;transform:scaleX(0.8770);transform-origin:0 0;-webkit-text-stroke:0.2px currentColor;">PARAFUSOS DIVERSOS</div>
<div class="t" style="right:300.40px;top:258px;font-size:8.5px;color:#1a1a1a;transform:scaleX(0.8770);transform-origin:100% 0;-webkit-text-stroke:0.2px currentColor;">7,50</div>
<div class="t" style="right:254.80px;top:258px;font-size:8.5px;color:#1a1a1a;transform:scaleX(0.8770);transform-origin:100% 0;-webkit-text-stroke:0.2px currentColor;">299,000</div>
<div class="t" style="left:548.50px;top:258px;font-size:8.5px;color:#1a1a1a;transform:scaleX(0.8770);transform-origin:0 0;-webkit-text-stroke:0.2px currentColor;">FERRAMENTAS</div>
<div class="t" style="left:653.00px;top:258px;font-size:8.5px;color:#1a1a1a;transform:scaleX(0.8770);transform-origin:0 0;-webkit-text-stroke:0.2px currentColor;">BARRICUDA</div>
<div style="position:absolute;left:53px;top:267px;width:674px;height:10px;background:#c2dac2;"></div>
<div style="position:absolute;left:53px;top:276px;width:674px;height:1px;background:#a0aca0;"></div>
<div style="position:absolute;left:53px;top:267px;width:674px;height:1px;background:#e8f2e8;"></div>
<div style="position:absolute;left:65px;top:267px;width:1px;height:9px;background:#a0aca0;"></div>
<div style="position:absolute;left:66px;top:267px;width:1px;height:9px;background:#e8f2e8;"></div>
<div style="position:absolute;left:149px;top:267px;width:1px;height:9px;background:#a0aca0;"></div>
<div style="position:absolute;left:150px;top:267px;width:1px;height:9px;background:#e8f2e8;"></div>
<div style="position:absolute;left:175px;top:267px;width:1px;height:9px;background:#a0aca0;"></div>
<div style="position:absolute;left:176px;top:267px;width:1px;height:9px;background:#e8f2e8;"></div>
<div style="position:absolute;left:432px;top:267px;width:1px;height:9px;background:#a0aca0;"></div>
<div style="position:absolute;left:433px;top:267px;width:1px;height:9px;background:#e8f2e8;"></div>
<div style="position:absolute;left:451px;top:267px;width:1px;height:9px;background:#a0aca0;"></div>
<div style="position:absolute;left:452px;top:267px;width:1px;height:9px;background:#e8f2e8;"></div>
<div style="position:absolute;left:500px;top:267px;width:1px;height:9px;background:#a0aca0;"></div>
<div style="position:absolute;left:501px;top:267px;width:1px;height:9px;background:#e8f2e8;"></div>
<div style="position:absolute;left:546px;top:267px;width:1px;height:9px;background:#a0aca0;"></div>
<div style="position:absolute;left:547px;top:267px;width:1px;height:9px;background:#e8f2e8;"></div>
<div style="position:absolute;left:650px;top:267px;width:1px;height:9px;background:#a0aca0;"></div>
<div style="position:absolute;left:651px;top:267px;width:1px;height:9px;background:#e8f2e8;"></div>
<div class="t" style="right:624.80px;top:268px;font-size:8.5px;color:#1a1a1a;transform:scaleX(0.8770);transform-origin:100% 0;-webkit-text-stroke:0.2px currentColor;">11</div>
<div class="t" style="left:178.00px;top:268px;font-size:8.5px;color:#1a1a1a;transform:scaleX(0.8770);transform-origin:0 0;-webkit-text-stroke:0.2px currentColor;">RAMO DE FLORES 16PETALAS</div>
<div class="t" style="right:300.40px;top:268px;font-size:8.5px;color:#1a1a1a;transform:scaleX(0.8770);transform-origin:100% 0;-webkit-text-stroke:0.2px currentColor;">26,00</div>
<div class="t" style="right:254.80px;top:268px;font-size:8.5px;color:#1a1a1a;transform:scaleX(0.8770);transform-origin:100% 0;-webkit-text-stroke:0.2px currentColor;">6,000</div>
<div class="t" style="left:548.50px;top:268px;font-size:8.5px;color:#1a1a1a;transform:scaleX(0.8770);transform-origin:0 0;-webkit-text-stroke:0.2px currentColor;">ROSAS</div>
<div class="t" style="left:653.00px;top:268px;font-size:8.5px;color:#1a1a1a;transform:scaleX(0.8770);transform-origin:0 0;-webkit-text-stroke:0.2px currentColor;">FLORES</div>
<div style="position:absolute;left:53px;top:277px;width:674px;height:9px;background:#e6e6e6;"></div>
<div style="position:absolute;left:53px;top:285px;width:674px;height:1px;background:#b0b0b0;"></div>
<div style="position:absolute;left:53px;top:277px;width:674px;height:1px;background:#f8f8f8;"></div>
<div style="position:absolute;left:65px;top:277px;width:1px;height:8px;background:#b0b0b0;"></div>
<div style="position:absolute;left:66px;top:277px;width:1px;height:8px;background:#f8f8f8;"></div>
<div style="position:absolute;left:149px;top:277px;width:1px;height:8px;background:#b0b0b0;"></div>
<div style="position:absolute;left:150px;top:277px;width:1px;height:8px;background:#f8f8f8;"></div>
<div style="position:absolute;left:175px;top:277px;width:1px;height:8px;background:#b0b0b0;"></div>
<div style="position:absolute;left:176px;top:277px;width:1px;height:8px;background:#f8f8f8;"></div>
<div style="position:absolute;left:432px;top:277px;width:1px;height:8px;background:#b0b0b0;"></div>
<div style="position:absolute;left:433px;top:277px;width:1px;height:8px;background:#f8f8f8;"></div>
<div style="position:absolute;left:451px;top:277px;width:1px;height:8px;background:#b0b0b0;"></div>
<div style="position:absolute;left:452px;top:277px;width:1px;height:8px;background:#f8f8f8;"></div>
<div style="position:absolute;left:500px;top:277px;width:1px;height:8px;background:#b0b0b0;"></div>
<div style="position:absolute;left:501px;top:277px;width:1px;height:8px;background:#f8f8f8;"></div>
<div style="position:absolute;left:546px;top:277px;width:1px;height:8px;background:#b0b0b0;"></div>
<div style="position:absolute;left:547px;top:277px;width:1px;height:8px;background:#f8f8f8;"></div>
<div style="position:absolute;left:650px;top:277px;width:1px;height:8px;background:#b0b0b0;"></div>
<div style="position:absolute;left:651px;top:277px;width:1px;height:8px;background:#f8f8f8;"></div>
<div class="t" style="right:624.80px;top:277px;font-size:8.5px;color:#1a1a1a;transform:scaleX(0.8770);transform-origin:100% 0;-webkit-text-stroke:0.2px currentColor;">7</div>
<div class="t" style="left:178.00px;top:277px;font-size:8.5px;color:#1a1a1a;transform:scaleX(0.8770);transform-origin:0 0;-webkit-text-stroke:0.2px currentColor;">REFORMA GERAL CASA 62MTR</div>
<div class="t" style="right:300.40px;top:277px;font-size:8.5px;color:#1a1a1a;transform:scaleX(0.8770);transform-origin:100% 0;-webkit-text-stroke:0.2px currentColor;">12.000,00</div>
<div style="position:absolute;left:53px;top:286px;width:674px;height:10px;background:#ffff00;"></div>
<div style="position:absolute;left:53px;top:295px;width:674px;height:1px;background:#c0c060;"></div>
<div style="position:absolute;left:53px;top:286px;width:674px;height:1px;background:#ffffb0;"></div>
<div style="position:absolute;left:65px;top:286px;width:1px;height:9px;background:#c0c060;"></div>
<div style="position:absolute;left:66px;top:286px;width:1px;height:9px;background:#ffffb0;"></div>
<div style="position:absolute;left:149px;top:286px;width:1px;height:9px;background:#c0c060;"></div>
<div style="position:absolute;left:150px;top:286px;width:1px;height:9px;background:#ffffb0;"></div>
<div style="position:absolute;left:175px;top:286px;width:1px;height:9px;background:#c0c060;"></div>
<div style="position:absolute;left:176px;top:286px;width:1px;height:9px;background:#ffffb0;"></div>
<div style="position:absolute;left:432px;top:286px;width:1px;height:9px;background:#c0c060;"></div>
<div style="position:absolute;left:433px;top:286px;width:1px;height:9px;background:#ffffb0;"></div>
<div style="position:absolute;left:451px;top:286px;width:1px;height:9px;background:#c0c060;"></div>
<div style="position:absolute;left:452px;top:286px;width:1px;height:9px;background:#ffffb0;"></div>
<div style="position:absolute;left:500px;top:286px;width:1px;height:9px;background:#c0c060;"></div>
<div style="position:absolute;left:501px;top:286px;width:1px;height:9px;background:#ffffb0;"></div>
<div style="position:absolute;left:546px;top:286px;width:1px;height:9px;background:#c0c060;"></div>
<div style="position:absolute;left:547px;top:286px;width:1px;height:9px;background:#ffffb0;"></div>
<div style="position:absolute;left:650px;top:286px;width:1px;height:9px;background:#c0c060;"></div>
<div style="position:absolute;left:651px;top:286px;width:1px;height:9px;background:#ffffb0;"></div>
<div class="t" style="right:624.80px;top:287px;font-size:8.5px;color:#1a1a1a;transform:scaleX(0.8770);transform-origin:100% 0;-webkit-text-stroke:0.2px currentColor;">13</div>
<div class="t" style="left:178.00px;top:287px;font-size:8.5px;color:#1a1a1a;transform:scaleX(0.8770);transform-origin:0 0;-webkit-text-stroke:0.2px currentColor;">TESTE DO TESTE</div>
<div class="t" style="right:254.80px;top:287px;font-size:8.5px;color:#1a1a1a;transform:scaleX(0.8770);transform-origin:100% 0;-webkit-text-stroke:0.2px currentColor;">4,000</div>
<div style="position:absolute;left:53px;top:296px;width:674px;height:10px;background:#c2dac2;"></div>
<div style="position:absolute;left:53px;top:305px;width:674px;height:1px;background:#a0aca0;"></div>
<div style="position:absolute;left:53px;top:296px;width:674px;height:1px;background:#e8f2e8;"></div>
<div style="position:absolute;left:65px;top:296px;width:1px;height:9px;background:#a0aca0;"></div>
<div style="position:absolute;left:66px;top:296px;width:1px;height:9px;background:#e8f2e8;"></div>
<div style="position:absolute;left:149px;top:296px;width:1px;height:9px;background:#a0aca0;"></div>
<div style="position:absolute;left:150px;top:296px;width:1px;height:9px;background:#e8f2e8;"></div>
<div style="position:absolute;left:175px;top:296px;width:1px;height:9px;background:#a0aca0;"></div>
<div style="position:absolute;left:176px;top:296px;width:1px;height:9px;background:#e8f2e8;"></div>
<div style="position:absolute;left:432px;top:296px;width:1px;height:9px;background:#a0aca0;"></div>
<div style="position:absolute;left:433px;top:296px;width:1px;height:9px;background:#e8f2e8;"></div>
<div style="position:absolute;left:451px;top:296px;width:1px;height:9px;background:#a0aca0;"></div>
<div style="position:absolute;left:452px;top:296px;width:1px;height:9px;background:#e8f2e8;"></div>
<div style="position:absolute;left:500px;top:296px;width:1px;height:9px;background:#a0aca0;"></div>
<div style="position:absolute;left:501px;top:296px;width:1px;height:9px;background:#e8f2e8;"></div>
<div style="position:absolute;left:546px;top:296px;width:1px;height:9px;background:#a0aca0;"></div>
<div style="position:absolute;left:547px;top:296px;width:1px;height:9px;background:#e8f2e8;"></div>
<div style="position:absolute;left:650px;top:296px;width:1px;height:9px;background:#a0aca0;"></div>
<div style="position:absolute;left:651px;top:296px;width:1px;height:9px;background:#e8f2e8;"></div>
<div class="t" style="right:624.80px;top:297px;font-size:8.5px;color:#1a1a1a;transform:scaleX(0.8770);transform-origin:100% 0;-webkit-text-stroke:0.2px currentColor;">13</div>
<div class="t" style="left:178.00px;top:297px;font-size:8.5px;color:#1a1a1a;transform:scaleX(0.8770);transform-origin:0 0;-webkit-text-stroke:0.2px currentColor;">TESTE DO TESTE TESTE</div>
<div class="t" style="right:300.40px;top:297px;font-size:8.5px;color:#1a1a1a;transform:scaleX(0.8770);transform-origin:100% 0;-webkit-text-stroke:0.2px currentColor;">105,00</div>
<div class="t" style="right:254.80px;top:297px;font-size:8.5px;color:#1a1a1a;transform:scaleX(0.8770);transform-origin:100% 0;-webkit-text-stroke:0.2px currentColor;">5,000</div>
<div style="position:absolute;left:727px;top:170px;width:11px;height:334px;background:#ececec;border-left:1px solid #f8f8f8;box-sizing:border-box;"></div>
<svg style="left:730.5px;top:174.8px" width="6" height="4"><path d="M0.3 3 L3 0.2 L5.7 3 Z" fill="#333"/></svg>
<svg style="left:730.5px;top:495.5px" width="6" height="4"><path d="M0.3 0.2 L3 3 L5.7 0.2 Z" fill="#333"/></svg>
<div style="position:absolute;left:728px;top:208px;width:10px;height:10px;box-sizing:border-box;border:1px solid #9a9a9a;border-radius:2px;background:linear-gradient(90deg,#f8f8f8,#e0e0e0);"></div>
<div style="position:absolute;left:53px;top:504px;width:674px;height:11px;background:#ececec;"></div>
<div style="position:absolute;left:727px;top:504px;width:11px;height:11px;background:#ececec;"></div>
<svg style="left:57px;top:507px" width="4" height="6"><path d="M3 0.3 L0.2 3 L3 5.7 Z" fill="#333"/></svg>
<svg style="left:719.5px;top:506.5px" width="4" height="6"><path d="M0.2 0.3 L3 3 L0.2 5.7 Z" fill="#333"/></svg>
<div style="position:absolute;left:65px;top:505px;width:11px;height:10px;box-sizing:border-box;border:1px solid #9a9a9a;border-radius:2px;background:linear-gradient(#f8f8f8,#dcdcdc);"></div>
<svg style="left:50.7px;top:526.8px" width="10" height="10" viewBox="0 0 10 10"><defs><linearGradient id="gR" x1="0" y1="0" x2="1" y2="1"><stop offset="0" stop-color="#cfd4d8"/><stop offset="1" stop-color="#f8f8f8"/></linearGradient></defs><circle cx="5" cy="5" r="4.3" fill="url(#gR)" stroke="#8a9298" stroke-width="0.8"/><circle cx="5" cy="5" r="2.8" fill="#2a5478"/><circle cx="4.3" cy="4.2" r="1" fill="#6a9ac0"/></svg>
<div class="t" style="left:64.75px;top:529px;font-size:8.2px;color:#151515;transform:scaleX(0.8865);transform-origin:0 0;">&gt; Habilitar Cores no Controle de Estoque</div>
<div style="position:absolute;left:213px;top:526px;width:11px;height:11px;background:#c2dac2;border:1px solid #e4ece4;box-sizing:border-box;"></div>
<div class="t" style="left:227.50px;top:529px;font-size:8.2px;color:#151515;transform:scaleX(0.8798);transform-origin:0 0;">Em estoque</div>
<div style="position:absolute;left:291px;top:526px;width:11px;height:11px;background:#ffff00;border:1px solid #f8f8b0;box-sizing:border-box;"></div>
<div class="t" style="left:305.75px;top:529px;font-size:8.2px;color:#151515;transform:scaleX(0.8841);transform-origin:0 0;">Estoque Baixo</div>
<div style="position:absolute;left:369px;top:526px;width:11px;height:11px;background:#f8a8a8;border:1px solid #f8d8d8;box-sizing:border-box;"></div>
<div class="t" style="left:383.75px;top:529px;font-size:8.2px;color:#151515;transform:scaleX(0.8997);transform-origin:0 0;">Estoque Zerado</div>
<div class="t" style="left:448.50px;top:529px;font-size:8.2px;color:#222;">|</div>
<div style="position:absolute;left:460px;top:526px;width:11px;height:11px;background:#e6e6e6;border:1px solid #f0f0f0;box-sizing:border-box;"></div>
<div class="t" style="left:472.50px;top:529px;font-size:8.2px;color:#151515;transform:scaleX(0.8927);transform-origin:0 0;">Item Serviço ou sem Controle de Estoque</div>
<div class="t" style="left:642.00px;top:529px;font-size:8.2px;color:#151515;transform:scaleX(0.8832);transform-origin:0 0;">Para sair ESC ou botão SAIR</div>
<div style="position:absolute;left:0px;top:583px;width:800px;height:17px;background:#f0f0f0;"></div>
<div style="position:absolute;left:0px;top:583px;width:800px;height:1px;background:#a0a0a0;"></div>
<div style="position:absolute;left:0px;top:584px;width:800px;height:1px;background:#ffffff;"></div>
<div style="position:absolute;left:2px;top:586px;width:265px;height:11px;box-sizing:border-box;border-top:1px solid #b4b4b4;border-left:1px solid #b4b4b4;border-right:1px solid #fff;border-bottom:1px solid #fff;"></div>
<div class="t" style="left:5.00px;top:588px;font-size:8.0px;color:#151515;transform:scaleX(0.9152);transform-origin:0 0;">SUA CIDADE - UF  5 de Dezembro de 2013 - Quinta-feira</div>
<div style="position:absolute;left:272px;top:586px;width:22px;height:11px;box-sizing:border-box;border-top:1px solid #b4b4b4;border-left:1px solid #b4b4b4;border-right:1px solid #fff;border-bottom:1px solid #fff;"></div>
<div class="t" style="left:275.00px;top:588px;font-size:8.0px;color:#151515;transform:scaleX(0.9117);transform-origin:0 0;">Num</div>
<div style="position:absolute;left:299px;top:586px;width:23px;height:11px;box-sizing:border-box;border-top:1px solid #b4b4b4;border-left:1px solid #b4b4b4;border-right:1px solid #fff;border-bottom:1px solid #fff;"></div>
<div class="t" style="left:301.60px;top:588px;font-size:8.0px;color:#151515;transform:scaleX(0.8781);transform-origin:0 0;">Caps</div>
<div style="position:absolute;left:327px;top:586px;width:17px;height:11px;box-sizing:border-box;border-top:1px solid #b4b4b4;border-left:1px solid #b4b4b4;border-right:1px solid #fff;border-bottom:1px solid #fff;"></div>
<div class="t" style="left:329.00px;top:588px;font-size:8.0px;color:#151515;transform:scaleX(0.9370);transform-origin:0 0;">Ins</div>
<div style="position:absolute;left:348px;top:586px;width:47px;height:11px;box-sizing:border-box;border-top:1px solid #b4b4b4;border-left:1px solid #b4b4b4;border-right:1px solid #fff;border-bottom:1px solid #fff;"></div>
<div class="t" style="left:350.00px;top:588px;font-size:8.0px;color:#151515;transform:scaleX(1.0240);transform-origin:0 0;">05/12/2013</div>
<div style="position:absolute;left:399px;top:586px;width:36px;height:11px;box-sizing:border-box;border-top:1px solid #b4b4b4;border-left:1px solid #b4b4b4;border-right:1px solid #fff;border-bottom:1px solid #fff;"></div>
<div class="t" style="left:401.00px;top:588px;font-size:8.0px;color:#151515;transform:scaleX(0.9821);transform-origin:0 0;">11:30:22</div>
<div style="position:absolute;left:438px;top:586px;width:97px;height:11px;box-sizing:border-box;border-top:1px solid #b4b4b4;border-left:1px solid #b4b4b4;border-right:1px solid #fff;border-bottom:1px solid #fff;"></div>
<div style="position:absolute;left:450px;top:587px;width:83px;height:9px;background:#22e022;"></div>
<div class="t" style="left:478.00px;top:588px;font-size:8.0px;color:#4a6a08;transform:scaleX(0.8999);transform-origin:0 0;">MASTER</div>
<svg style="left:440px;top:586px" width="10" height="10" viewBox="0 0 10 10"><rect x="0.5" y="1" width="4" height="8" fill="#e8c040" stroke="#8a7020" stroke-width="0.5"/><rect x="5" y="3" width="4" height="6" fill="#f0d050" stroke="#8a7020" stroke-width="0.5"/><rect x="3" y="6" width="4" height="3.5" fill="#4a6ac0"/></svg>
<div style="position:absolute;left:538px;top:586px;width:96px;height:11px;box-sizing:border-box;border-top:1px solid #b4b4b4;border-left:1px solid #b4b4b4;border-right:1px solid #fff;border-bottom:1px solid #fff;"></div>
<div class="t" style="left:569.00px;top:588px;font-size:8.0px;color:#151515;transform:scaleX(0.9193);transform-origin:0 0;">DEMO OS 5.6</div>
<svg style="left:540px;top:586px" width="11" height="10" viewBox="0 0 11 10"><path d="M1 1 L7 0.5 L10 6 L4 9 Z" fill="#d8e4f0" stroke="#8aa0b8" stroke-width="0.6"/><path d="M1 1 L7 0.5 L6 4 L1 4 Z" fill="#5aa0d8"/></svg>
<div style="position:absolute;left:638px;top:586px;width:44px;height:11px;box-sizing:border-box;border-top:1px solid #b4b4b4;border-left:1px solid #b4b4b4;border-right:1px solid #fff;border-bottom:1px solid #fff;"></div>
<div class="t" style="left:657.00px;top:588px;font-size:8.0px;color:#111;transform:scaleX(0.8698);transform-origin:0 0;-webkit-text-stroke:0.3px currentColor;">Email</div>
<svg style="left:640px;top:586px" width="11" height="10" viewBox="0 0 11 10"><rect x="0.5" y="4" width="10" height="5.5" fill="#e4eaf0" stroke="#6a7a8a" stroke-width="0.6"/><circle cx="6" cy="4" r="3.5" fill="#3a9ad0"/><path d="M3.5 3.5 Q6 2 8.5 4" stroke="#4ab04a" stroke-width="1.2" fill="none"/></svg>
<div style="position:absolute;left:685px;top:586px;width:16px;height:11px;box-sizing:border-box;border-top:1px solid #b4b4b4;border-left:1px solid #b4b4b4;border-right:1px solid #fff;border-bottom:1px solid #fff;"></div>
<svg style="left:687px;top:586px" width="12" height="11" viewBox="0 0 12 11"><path d="M1.5 1 L7 1 L10.5 5 L10.5 8.5 L8 10 L2 10 L1 6 Z" fill="#c8c8c8" stroke="#8a8a8a" stroke-width="0.6"/><path d="M2 2 L6.5 2 L8 4.5 L3 5 Z" fill="#eeeeee"/><path d="M2.5 8 H9" stroke="#6a6a6a" stroke-width="0.8"/></svg>
<div style="position:absolute;left:704px;top:586px;width:17px;height:11px;box-sizing:border-box;border-top:1px solid #b4b4b4;border-left:1px solid #b4b4b4;border-right:1px solid #fff;border-bottom:1px solid #fff;"></div>
<svg style="left:706px;top:586px" width="12" height="11" viewBox="0 0 12 11"><rect x="1" y="1.5" width="9.5" height="4.5" fill="#9a9a9a" stroke="#4a4a4a" stroke-width="0.6"/><rect x="2" y="2.8" width="7.5" height="1.4" fill="#f4f4f4"/><path d="M1 8.8 H11" stroke="#222" stroke-width="1"/><path d="M5.75 6 V9" stroke="#222" stroke-width="1"/></svg>
<div style="position:absolute;left:724px;top:586px;width:50px;height:11px;box-sizing:border-box;border-top:1px solid #b4b4b4;border-left:1px solid #b4b4b4;border-right:1px solid #fff;border-bottom:1px solid #fff;"></div>
<div class="t" style="left:729.30px;top:588px;font-size:8.0px;color:#c03848;transform:scaleX(0.9244);transform-origin:0 0;-webkit-text-stroke:0px;">FpqSystem</div>
<div style="position:absolute;left:776px;top:586px;width:14px;height:11px;box-sizing:border-box;border-top:1px solid #b4b4b4;border-left:1px solid #b4b4b4;border-right:1px solid #fff;border-bottom:1px solid #fff;"></div>
<svg style="left:777px;top:586px" width="12" height="10" viewBox="0 0 12 10"><rect x="0.5" y="1" width="4" height="8" fill="#e8c040" stroke="#8a7020" stroke-width="0.5"/><rect x="5" y="3" width="4" height="6" fill="#f0d050" stroke="#8a7020" stroke-width="0.5"/><rect x="3" y="6" width="4" height="3.5" fill="#4a6ac0"/></svg>
<div style="position:absolute;left:0px;top:597px;width:800px;height:3px;background:#c4c8cc;"></div>
<div style="position:absolute;left:0px;top:597px;width:40px;height:3px;background:#eeeeee;border-top:1px solid #8a8a8a;border-left:1px solid #9a9a9a;border-right:1px solid #9a9a9a;box-sizing:border-box;"></div>
<div style="position:absolute;left:42px;top:597px;width:40px;height:3px;background:#eeeeee;border-top:1px solid #8a8a8a;border-left:1px solid #9a9a9a;border-right:1px solid #9a9a9a;box-sizing:border-box;"></div>
<div style="position:absolute;left:84px;top:597px;width:41px;height:3px;background:#eeeeee;border-top:1px solid #8a8a8a;border-left:1px solid #9a9a9a;border-right:1px solid #9a9a9a;box-sizing:border-box;"></div>
<div style="position:absolute;left:127px;top:597px;width:41px;height:3px;background:#eeeeee;border-top:1px solid #8a8a8a;border-left:1px solid #9a9a9a;border-right:1px solid #9a9a9a;box-sizing:border-box;"></div>
<div style="position:absolute;left:170px;top:597px;width:41px;height:3px;background:#eeeeee;border-top:1px solid #8a8a8a;border-left:1px solid #9a9a9a;border-right:1px solid #9a9a9a;box-sizing:border-box;"></div>
<div style="position:absolute;left:213px;top:597px;width:43px;height:3px;background:#eeeeee;border-top:1px solid #8a8a8a;border-left:1px solid #9a9a9a;border-right:1px solid #9a9a9a;box-sizing:border-box;"></div>
<div style="position:absolute;left:258px;top:597px;width:39px;height:3px;background:#eeeeee;border-top:1px solid #8a8a8a;border-left:1px solid #9a9a9a;border-right:1px solid #9a9a9a;box-sizing:border-box;"></div>
</body></html>
